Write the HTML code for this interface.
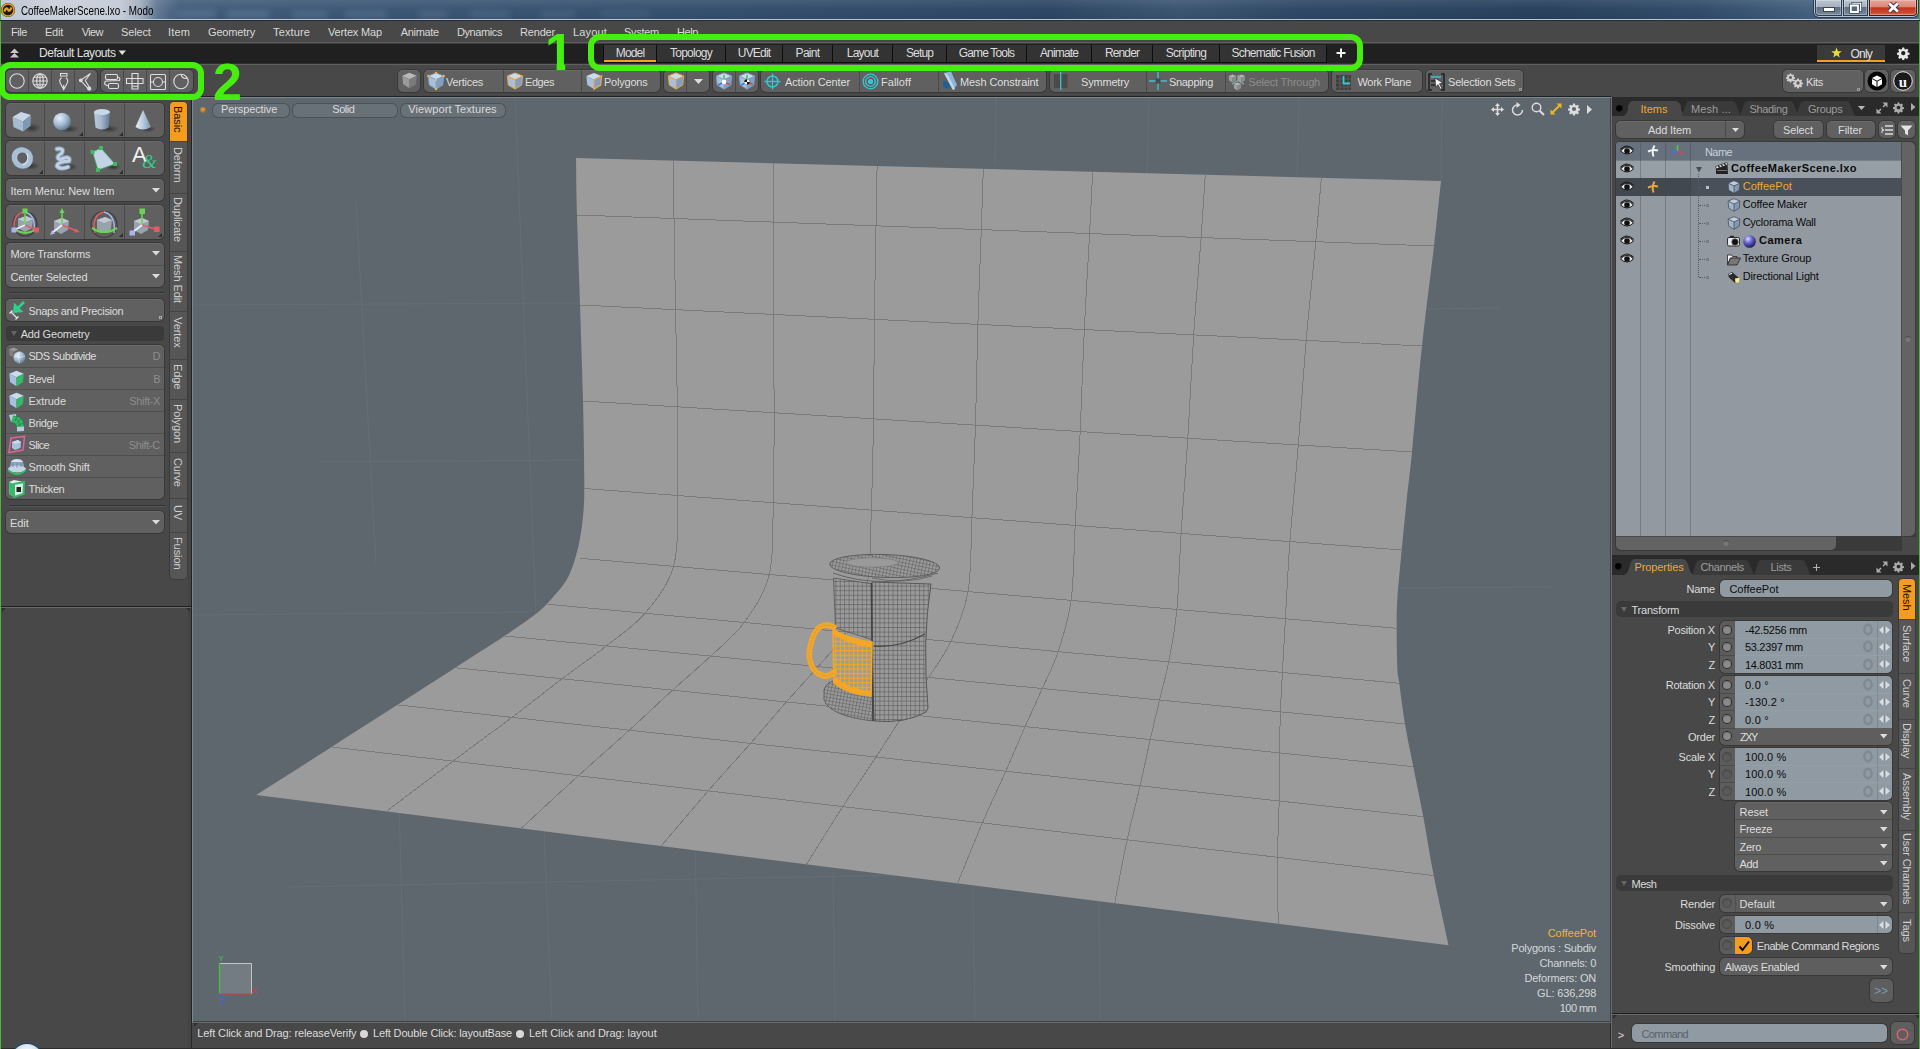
<!DOCTYPE html>
<html><head><meta charset="utf-8"><title>CoffeeMakerScene.lxo - Modo</title>
<style>
*{box-sizing:border-box;margin:0;padding:0}
html,body{width:1920px;height:1049px;overflow:hidden}
body{position:relative;background:#484848;font-family:"Liberation Sans",sans-serif;font-size:11px;color:#d4d4d4;line-height:1}
.a{position:absolute}
.t{position:absolute;white-space:nowrap;transform-origin:0 50%;letter-spacing:-0.15px}
.btn{position:absolute;background:#606060;border-radius:5px;box-shadow:0 0 0 1px #383838, inset 0 1px 0 #6a6a6a}
.dv{position:absolute;width:1px;background:#494949;top:0;bottom:0}
.grp{position:absolute;background:#606060;border-radius:5px;box-shadow:0 0 0 1px #383838, inset 0 1px 0 #6a6a6a}
svg{position:absolute;overflow:visible}
.vt{position:absolute;writing-mode:vertical-rl;white-space:nowrap;font-size:11px;color:#c8c8c8;letter-spacing:-0.1px}
</style></head>
<body>
<!-- title bar -->
<div class="a" style="left:0;top:0;width:1920px;height:20px;background:linear-gradient(180deg,rgba(255,255,255,0.10) 0,rgba(255,255,255,0.02) 45%,rgba(0,0,0,0.04) 100%),linear-gradient(90deg,#45607f 0px,#3c5776 300px,#35506f 600px,#2e4967 900px,#2b4563 1050px,#39536f 1180px,#2c4664 1300px,#263f5c 1550px,#2f4a68 1700px,#44617f 1820px,#52708f 1920px)"></div>
<div class="a" style="left:0;top:0;width:230px;height:19px;background:linear-gradient(90deg,rgba(198,205,216,0.95) 0,rgba(208,214,223,0.97) 60px,rgba(205,211,221,0.95) 120px,rgba(190,198,211,0.80) 140px,rgba(150,164,184,0.40) 157px,rgba(120,140,165,0) 180px)"></div>
<div class="a" style="left:176px;top:10px;width:40px;height:8px;border-radius:4px;background:rgba(140,165,195,0.28);filter:blur(3px)"></div>
<div class="a" style="left:226px;top:11px;width:44px;height:7px;border-radius:4px;background:rgba(140,165,195,0.30);filter:blur(3px)"></div>
<div class="a" style="left:292px;top:11px;width:36px;height:7px;border-radius:4px;background:rgba(140,165,195,0.25);filter:blur(3px)"></div>
<div class="a" style="left:345px;top:11px;width:42px;height:7px;border-radius:4px;background:rgba(140,165,195,0.25);filter:blur(3px)"></div>
<div class="a" style="left:418px;top:11px;width:30px;height:7px;border-radius:4px;background:rgba(140,165,195,0.22);filter:blur(3px)"></div>
<div class="a" style="left:470px;top:11px;width:40px;height:7px;border-radius:4px;background:rgba(140,165,195,0.20);filter:blur(3px)"></div>
<div class="a" style="left:540px;top:11px;width:36px;height:7px;border-radius:4px;background:rgba(140,165,195,0.18);filter:blur(3px)"></div>
<div class="a" style="left:600px;top:11px;width:50px;height:7px;border-radius:4px;background:rgba(140,165,195,0.15);filter:blur(3px)"></div>
<div class="a" style="left:0;top:19px;width:1920px;height:1px;background:#b9c7d6"></div>
<div class="a" style="left:0;top:20px;width:1920px;height:1px;background:#232c36;z-index:1"></div>
<div class="t" style="left:21px;top:4px;font-size:12px;color:#000;letter-spacing:0;height:14px;line-height:14px;transform:scaleX(0.818)">CoffeeMakerScene.lxo - Modo</div>
<!-- menu bar -->
<div class="a" style="left:0;top:21px;width:1920px;height:21px;background:#484848"></div>
<div class="a" style="left:0;top:42px;width:1920px;height:1px;background:#5f5f5f"></div>
<!-- layout bar -->
<div class="a" style="left:0;top:43px;width:1920px;height:21px;background:#202020"></div>
<div class="a" style="left:0;top:43px;width:1920px;height:1px;background:#3c3c3c"></div>
<div class="a" style="left:0;top:63px;width:1920px;height:1px;background:#303030"></div>
<div class="a" style="left:0;top:64px;width:1920px;height:1px;background:#5f5f5f"></div>
<!-- toolbar -->
<div class="a" style="left:0;top:65px;width:1920px;height:32px;background:#484848"></div>
<!-- left panel -->
<div class="a" style="left:0;top:97px;width:192px;height:952px;background:#484848"></div>
<div class="a" style="left:188px;top:97px;width:3px;height:952px;background:#444"></div>
<!-- viewport -->
<div class="a" style="left:191px;top:96px;width:1420px;height:926px;background:#202224"></div>
<div class="a" style="left:192px;top:97px;width:1419px;height:925px;background:#7d878f"></div>
<div class="a" style="left:193px;top:98px;width:1418px;height:924px;background:#3a454c"></div>
<div class="a" style="left:193px;top:98px;width:1417px;height:923px;background:#5f676e"></div>
<!-- status bar -->
<div class="a" style="left:191px;top:1022px;width:1421px;height:27px;background:#484848"></div>
<div class="a" style="left:192px;top:1022px;width:1420px;height:1px;background:#696969"></div>
<div class="a" style="left:191px;top:1022px;width:1px;height:27px;background:#2a2a2a"></div>
<div class="a" style="left:1610px;top:1023px;width:1px;height:26px;background:#2a2a2a"></div>
<!-- right panel -->
<div class="a" style="left:1611px;top:97px;width:309px;height:952px;background:#484848"></div>
<div class="a" style="left:1611px;top:97px;width:1px;height:952px;background:#696969"></div>
<!-- bottom edge -->
<div class="a" style="left:0;top:1048px;width:1920px;height:1px;background:#2c2c2c"></div>
<div class="a" style="left:11px;top:1044px;width:32px;height:32px;border-radius:50%;background:radial-gradient(circle at 50% 30%,#fff 0,#dfe8f0 30%,#a9bccb 60%);box-shadow:0 0 0 1px #0c4a84"></div>
<svg class="a" style="left:193px;top:98px;overflow:hidden" width="1417" height="923" viewBox="0 0 1417 923">
<path d="M322.0 -1.0L344.0 542.0M351.0 733.0L359.0 923.0M163.0 102.0L183.0 467.0M206.0 702.0L212.0 923.0M502.0 732.0L505.0 923.0M640.0 772.0L642.0 923.0M780.0 792.0L782.0 923.0M906.0 802.0L907.0 923.0M803.0 -1.0L802.0 67.0M956.0 -1.0L954.0 77.0M1106.0 -1.0L1104.0 82.0M1249.0 -1.0L1248.0 87.0M0.0 207.0L387.0 205.0M127.0 364.0L389.0 362.0M0.0 517.0L337.0 514.0M94.0 789.0L715.0 777.0M1227.0 211.0L1307.0 210.0M1207.0 490.0L1357.0 489.0" stroke="#69747b" stroke-width="0.8" fill="none" opacity="0.7"/>
<path d="M383.0 60.0C383.2 69.5 383.3 92.5 384.0 117.0C384.7 141.5 386.0 176.0 387.0 207.0C388.0 238.0 389.3 273.8 390.0 303.0C390.7 332.2 391.2 363.3 391.3 382.0C391.3 400.7 391.3 404.2 390.3 415.3C389.3 426.4 387.8 438.1 385.3 448.7C382.8 459.3 379.5 470.4 375.3 478.7C371.1 487.0 365.6 492.6 360.3 498.7C355.0 504.8 352.0 508.6 343.7 515.3C335.4 522.0 323.6 529.8 310.3 538.7C297.0 547.6 281.5 557.3 263.7 568.7C245.9 580.1 224.8 593.8 203.7 607.3C182.6 620.8 160.4 635.0 137.0 650.0C113.6 665.0 75.6 689.2 63.3 697.0L1255.6 847.3C1253.1 835.7 1244.9 798.9 1240.7 777.5C1236.5 756.1 1233.7 736.8 1230.3 718.7C1226.9 700.6 1223.3 684.2 1220.3 668.7C1217.2 653.2 1214.3 639.9 1212.0 626.0C1209.7 612.1 1207.6 594.8 1206.3 585.3C1205.0 575.8 1204.7 577.9 1204.3 568.7C1203.9 559.5 1203.7 541.4 1203.7 530.3C1203.7 519.2 1203.5 515.0 1204.3 502.0C1205.1 488.9 1207.1 468.7 1208.7 452.0C1210.3 435.3 1212.0 418.3 1213.7 402.0C1215.4 385.7 1216.5 379.7 1219.0 354.0C1221.5 328.3 1225.3 282.3 1229.0 248.0C1232.7 213.7 1237.8 175.5 1241.0 148.0C1244.2 120.5 1246.8 93.8 1248.0 83.0Z" fill="#9b9b9b"/>
<path d="M384.0 117.0 L1241.0 148.0M387.0 207.0 L1229.0 248.0M390.0 303.0 L1219.0 354.0M391.3 390.5 L1208.7 452.0M387.0 460.3 L1203.7 530.3M355.3 506.3 L1206.3 585.3M312.0 538.0 L1212.0 626.0M262.0 569.7 L1220.3 668.7M205.3 607.0 L1230.3 718.7M138.7 649.0 L1240.7 777.5M480.6 62.6C480.6 72.2 480.6 95.7 481.0 120.5C481.3 145.4 482.0 180.3 482.5 211.7C483.1 243.0 484.0 277.8 484.4 308.8C484.7 339.8 485.2 370.9 484.6 397.5C484.0 424.1 485.9 448.7 480.5 468.3C475.1 487.9 463.1 502.0 452.0 515.3C440.8 528.5 427.2 537.0 413.4 547.9C399.6 558.8 384.9 568.9 369.1 580.8C353.4 592.7 337.2 605.7 319.0 619.4C300.8 633.1 280.8 647.5 259.9 663.1C239.0 678.8 204.4 705.0 193.3 713.4M580.9 65.3C580.9 75.1 580.6 98.9 580.6 124.1C580.5 149.3 580.5 184.7 580.6 216.4C580.7 248.2 581.2 283.4 581.1 314.8C581.1 346.1 581.1 377.8 580.3 404.7C579.4 431.7 581.1 456.6 576.3 476.5C571.4 496.5 560.9 510.9 551.2 524.5C541.4 538.1 529.7 546.8 517.7 558.1C505.8 569.4 493.1 579.8 479.5 592.2C466.0 604.5 452.0 617.9 436.3 632.2C420.6 646.4 403.4 661.4 385.3 677.8C367.3 694.1 337.7 721.6 328.2 730.4M684.1 68.0C683.9 78.0 683.4 102.3 683.0 127.8C682.5 153.4 681.8 189.2 681.4 221.3C681.0 253.5 681.0 289.1 680.5 320.9C680.0 352.7 679.3 384.8 678.3 412.1C677.3 439.4 678.6 464.6 674.4 484.9C670.2 505.2 661.3 520.0 653.1 533.9C644.8 547.9 635.0 556.9 625.1 568.6C615.1 580.3 604.6 591.1 593.4 603.9C582.1 616.7 570.7 630.6 557.6 645.4C544.6 660.2 530.1 675.8 515.2 692.9C500.3 710.0 476.0 738.9 468.2 748.0M790.3 70.8C790.0 81.0 789.2 105.7 788.3 131.6C787.4 157.5 785.9 193.8 784.9 226.4C783.9 259.0 783.4 294.9 782.5 327.1C781.5 359.4 780.2 391.9 778.9 419.7C777.7 447.4 778.5 472.9 775.0 493.6C771.4 514.2 764.3 529.3 757.7 543.7C751.1 558.0 743.4 567.3 735.6 579.4C727.7 591.5 719.6 602.8 710.8 616.1C702.1 629.3 693.2 643.6 683.0 659.1C672.9 674.5 661.4 690.7 649.8 708.6C638.2 726.5 619.6 756.7 613.5 766.4M899.7 73.7C899.2 84.0 898.0 109.2 896.6 135.5C895.2 161.8 892.9 198.5 891.3 231.6C889.7 264.6 888.7 300.9 887.2 333.6C885.7 366.2 883.7 399.3 882.2 427.4C880.7 455.6 880.9 481.4 878.1 502.4C875.3 523.4 870.0 538.9 865.2 553.6C860.4 568.3 854.9 578.0 849.3 590.5C843.8 603.0 838.2 614.8 832.1 628.6C826.0 642.4 819.9 657.2 812.8 673.2C805.7 689.2 797.4 706.2 789.4 724.9C781.3 743.6 768.7 775.3 764.6 785.4M1012.3 76.7C1011.6 87.2 1010.0 112.9 1008.1 139.6C1006.1 166.3 1002.9 203.4 1000.7 236.9C998.5 270.3 996.9 307.1 994.8 340.2C992.7 373.3 990.0 406.9 988.1 435.4C986.3 463.9 985.9 490.0 983.9 511.5C981.8 532.9 978.6 548.8 975.7 563.9C972.9 579.0 969.6 589.1 966.6 602.0C963.5 614.9 960.5 627.2 957.2 641.5C954.0 655.8 950.9 671.1 947.1 687.8C943.2 704.5 938.4 722.2 934.2 741.8C929.9 761.3 923.8 794.6 921.7 805.2M1128.4 79.8C1127.4 90.5 1125.3 116.6 1122.8 143.7C1120.3 170.8 1116.1 208.5 1113.2 242.4C1110.3 276.2 1108.0 313.5 1105.3 347.0C1102.6 380.5 1099.1 414.6 1096.9 443.6C1094.8 472.5 1093.6 498.9 1092.4 520.8C1091.1 542.6 1090.2 558.9 1089.4 574.4C1088.6 590.0 1087.9 600.4 1087.4 613.8C1086.9 627.2 1086.8 640.0 1086.6 654.9C1086.4 669.7 1086.5 685.6 1086.2 703.0C1085.8 720.4 1084.7 738.8 1084.5 759.3C1084.3 779.8 1085.1 814.7 1085.2 825.8" fill="none" stroke="#7b7b7b" stroke-width="1" shape-rendering="crispEdges"/>
<!--VIEWEXTRA-->
<defs>
<pattern id="wf" width="4.4" height="4.6" patternUnits="userSpaceOnUse"><rect width="4.4" height="4.6" fill="#9a9a9a"/><path d="M0 0.5H4.4M0.5 0V4.6" stroke="#5c5c5c" stroke-width="0.6"/></pattern>
<pattern id="wf2" width="3.4" height="3.4" patternUnits="userSpaceOnUse" patternTransform="rotate(10)"><rect width="3.4" height="3.4" fill="#999"/><path d="M0 0.5H3.4M0.5 0V3.4" stroke="#606060" stroke-width="0.55"/></pattern>
<pattern id="wo" width="4.4" height="4.6" patternUnits="userSpaceOnUse"><rect width="4.4" height="4.6" fill="#a09c94"/><path d="M0 0.5H4.4M0.5 0V4.6" stroke="#f5a623" stroke-width="1.1"/></pattern>
</defs>
<path d="M631.0 592.0 Q633.0 583.0 647.0 581.0 L680.0 585.0 680.0 623.0 Q637.0 618.0 631.0 602.0 Z" fill="url(#wf2)" stroke="#555" stroke-width="0.8"/>
<path d="M640.5 480.0 L680.0 486.0 L680.0 542.0 L642.5 530.0 Z" fill="url(#wf)" stroke="#555" stroke-width="0.8"/>
<path d="M679.0 484.0 L738.0 486.0 Q729.0 542.0 735.0 610.0 L733.0 614.0 Q712.0 626.0 681.0 623.0 Q678.0 552.0 679.0 484.0 Z" fill="url(#wf)" stroke="#505050" stroke-width="0.9"/>
<path d="M681.0 548.0 Q707.0 550.0 732.0 536.0" stroke="#4a4a4a" stroke-width="1.3" fill="none"/>
<path d="M678.5 485.0 L680.0 623.0" stroke="#444" stroke-width="1.6" fill="none"/>
<ellipse cx="691.7" cy="468.0" rx="55" ry="11.5" fill="url(#wf2)" stroke="#5a5a5a" stroke-width="0.9" transform="rotate(2 691.7 468.0)"/>
<ellipse cx="679.0" cy="464.5" rx="26" ry="4.5" fill="#9a9a9a" stroke="#777" stroke-width="0.5"/>
<path d="M640.0 475.0 Q687.0 492.0 745.0 475.0" stroke="#5a5a5a" stroke-width="0.9" fill="none"/>
<path d="M679.0 480.0 Q712.0 487.0 739.0 478.0" stroke="#5a5a5a" stroke-width="0.7" fill="none"/>
<path d="M640.0 532.0 Q659.0 542.0 679.0 544.0 L678.0 598.0 Q655.0 596.0 641.0 585.0 Z" fill="url(#wo)" stroke="#f5a623" stroke-width="1.6"/>
<path d="M641.0 581.0 Q657.0 594.0 678.0 595.0" stroke="#f5a623" stroke-width="4.5" fill="none"/>
<path d="M640.0 534.0 Q659.0 545.0 679.0 547.0" stroke="#f5a623" stroke-width="4.5" fill="none"/>
<path d="M641.0 529.0 Q625.0 522.0 619.0 542.0 Q612.0 562.0 623.0 574.0 Q633.0 582.0 641.0 574.0 Q641.0 574.0 641.0 574.0" stroke="#f5a623" stroke-width="5.6" fill="none" stroke-linecap="round"/>
<path d="M641.0 529.0 Q625.0 522.0 619.0 542.0 Q612.0 562.0 623.0 574.0 Q633.0 582.0 641.0 574.0" stroke="#a49a8a" stroke-width="1" fill="none" stroke-dasharray="1.5 1.5"/>
<rect x="26.5" y="865.5" width="32" height="30.5" fill="#747c83"/>
<path d="M26.5 865.5 L58.5 865.5 L58.5 896.0" stroke="#c4c4c4" stroke-width="1" fill="none"/>
<path d="M26.5 865.0 L26.5 896.5" stroke="#3fc63f" stroke-width="1.2"/>
<path d="M26.0 896.0 L58.5 896.0" stroke="#e03636" stroke-width="1.2"/>
<path d="M26.5 896.0 L32.0 900.5" stroke="#3a66e8" stroke-width="1.2"/>
<text x="25.5" y="862.5" font-size="8" fill="#3fc63f" font-family="Liberation Sans,sans-serif">Y</text>
<text x="58.5" y="895.0" font-size="8" fill="#e03636" font-family="Liberation Sans,sans-serif">X</text>
<text x="27.0" y="905.5" font-size="8" fill="#3a66e8" font-family="Liberation Sans,sans-serif">Z</text>
</svg>
<div class="a" style="left:199.5px;top:106.5px;width:6px;height:6px;border-radius:50%;background:radial-gradient(circle at 45% 40%,#e8a040,#7a5a30)"></div>
<div class="a" style="left:212.5px;top:103.5px;width:76px;height:13px;background:#687178;border-radius:5px;box-shadow:0 0 0 1px #4b5359"></div>
<div class="a" style="left:292.5px;top:103.5px;width:104px;height:13px;background:#687178;border-radius:5px;box-shadow:0 0 0 1px #4b5359"></div>
<div class="a" style="left:400.5px;top:103.5px;width:104px;height:13px;background:#687178;border-radius:5px;box-shadow:0 0 0 1px #4b5359"></div>
<div class="t" style="left:221.0px;top:102.3px;font-size:11px;line-height:15px;letter-spacing:-0.11px;color:#dadada;">Perspective</div>
<div class="t" style="left:332.3px;top:102.3px;font-size:11px;line-height:15px;letter-spacing:-0.49px;color:#dadada;">Solid</div>
<div class="t" style="left:408.3px;top:102.3px;font-size:11px;line-height:15px;letter-spacing:0.08px;color:#dadada;">Viewport Textures</div>
<svg class="a" style="left:1491px;top:102.5px" width="13" height="13" viewBox="0 0 13 13"><path d="M6.500 0 L9 3 H7.300 V5.700 H10 V4 L13 6.500 L10 9 V7.300 H7.300 V10 H9 L6.500 13 L4 10 H5.700 V7.300 H3 V9 L0 6.500 L3 4 V5.700 H5.700 V3 H4Z" fill="#dcdcdc"/></svg>
<svg class="a" style="left:1511px;top:102px" width="13" height="14" viewBox="0 0 13 14"><path d="M6.500 3 A5 5 0 1 0 11.500 8" fill="none" stroke="#dcdcdc" stroke-width="1.500"/><path d="M5.500 0 L9.500 3 L5.500 6Z" fill="#dcdcdc"/></svg>
<svg class="a" style="left:1531px;top:102px" width="14" height="14" viewBox="0 0 14 14"><circle cx="5.500" cy="5.500" r="4.300" fill="none" stroke="#dcdcdc" stroke-width="1.400"/><path d="M8.700 8.700 L13 13" stroke="#dcdcdc" stroke-width="2"/></svg>
<svg class="a" style="left:1550px;top:103px" width="12" height="12" viewBox="0 0 12 12"><path d="M6.500 0.500H11.500V5.500Z M0.500 6.500V11.500H5.500Z" fill="#e8b820"/><path d="M10 2 L2 10" stroke="#e8b820" stroke-width="2"/></svg>
<svg class="a" style="left:1567.5px;top:103px" width="12" height="12" viewBox="0 0 20 20"><g fill="#dcdcdc"><path d="M10 0.8l1.6 0.2 0.5 2.6 1.6 0.7 2.2-1.5 2.3 2.3-1.5 2.2 0.7 1.6 2.6 0.5v3.2l-2.6 0.5-0.7 1.6 1.5 2.2-2.3 2.3-2.2-1.5-1.6 0.7-0.5 2.6h-3.2l-0.5-2.6-1.6-0.7-2.2 1.5-2.3-2.3 1.5-2.2-0.7-1.6-2.6-0.5v-3.2l2.6-0.5 0.7-1.6-1.5-2.2 2.3-2.3 2.2 1.5 1.6-0.7 0.5-2.6z M10 6.6a3.4 3.4 0 1 0 0.01 0z" fill-rule="evenodd"/></g></svg>
<svg class="a" style="left:1587px;top:104.5px" width="5" height="9" viewBox="0 0 5 9"><path d="M0 0V9L5 4.500Z" fill="#dcdcdc"/></svg>
<div class="t" style="left:1547.7px;top:926.0px;font-size:11px;line-height:15px;letter-spacing:-0.03px;color:#f5b030;">CoffeePot</div>
<div class="t" style="left:1511.3px;top:941.0px;font-size:11px;line-height:15px;letter-spacing:-0.19px;color:#d3d7da;">Polygons : Subdiv</div>
<div class="t" style="left:1539.5px;top:956.0px;font-size:11px;line-height:15px;letter-spacing:-0.19px;color:#d3d7da;">Channels: 0</div>
<div class="t" style="left:1524.4px;top:971.0px;font-size:11px;line-height:15px;letter-spacing:-0.17px;color:#d3d7da;">Deformers: ON</div>
<div class="t" style="left:1537.0px;top:986.0px;font-size:11px;line-height:15px;letter-spacing:-0.13px;color:#d3d7da;">GL: 636,298</div>
<div class="t" style="left:1559.8px;top:1001.0px;font-size:11px;line-height:15px;letter-spacing:-0.56px;color:#d3d7da;">100 mm</div>
<div class="t" style="left:197.3px;top:1026.0px;font-size:11px;line-height:15px;letter-spacing:-0.12px;color:#dcdcdc;">Left Click and Drag: releaseVerify</div>
<div class="a" style="left:360px;top:1029.5px;width:8px;height:8px;border-radius:50%;background:#d8d8d8"></div>
<div class="t" style="left:373.0px;top:1026.0px;font-size:11px;line-height:15px;letter-spacing:-0.16px;color:#dcdcdc;">Left Double Click: layoutBase</div>
<div class="a" style="left:516px;top:1029.5px;width:8px;height:8px;border-radius:50%;background:#d8d8d8"></div>
<div class="t" style="left:529.0px;top:1026.0px;font-size:11px;line-height:15px;letter-spacing:-0.05px;color:#dcdcdc;">Left Click and Drag: layout</div>
<svg class="a" style="left:194px;top:1023px" width="4" height="4" viewBox="0 0 4 4"><path d="M0 0H4L0 4Z" fill="#2e2e2e"/></svg>
<div class="t" style="left:11.0px;top:25.0px;font-size:11px;line-height:15px;letter-spacing:-0.43px;color:#d8d8d8;">File</div>
<div class="t" style="left:45.0px;top:25.0px;font-size:11px;line-height:15px;letter-spacing:-0.24px;color:#d8d8d8;">Edit</div>
<div class="t" style="left:81.7px;top:25.0px;font-size:11px;line-height:15px;letter-spacing:-0.59px;color:#d8d8d8;">View</div>
<div class="t" style="left:121.0px;top:25.0px;font-size:11px;line-height:15px;letter-spacing:-0.15px;color:#d8d8d8;">Select</div>
<div class="t" style="left:168.0px;top:25.0px;font-size:11px;line-height:15px;letter-spacing:0.15px;color:#d8d8d8;">Item</div>
<div class="t" style="left:208.0px;top:25.0px;font-size:11px;line-height:15px;letter-spacing:-0.16px;color:#d8d8d8;">Geometry</div>
<div class="t" style="left:273.0px;top:25.0px;font-size:11px;line-height:15px;letter-spacing:0.13px;color:#d8d8d8;">Texture</div>
<div class="t" style="left:328.0px;top:25.0px;font-size:11px;line-height:15px;letter-spacing:-0.17px;color:#d8d8d8;">Vertex Map</div>
<div class="t" style="left:400.7px;top:25.0px;font-size:11px;line-height:15px;letter-spacing:-0.30px;color:#d8d8d8;">Animate</div>
<div class="t" style="left:457.0px;top:25.0px;font-size:11px;line-height:15px;letter-spacing:-0.41px;color:#d8d8d8;">Dynamics</div>
<div class="t" style="left:520.0px;top:25.0px;font-size:11px;line-height:15px;letter-spacing:-0.18px;color:#d8d8d8;">Render</div>
<div class="t" style="left:573.0px;top:25.0px;font-size:11px;line-height:15px;letter-spacing:0.16px;color:#d8d8d8;">Layout</div>
<div class="t" style="left:624.0px;top:25.0px;font-size:11px;line-height:15px;letter-spacing:-0.28px;color:#d8d8d8;">System</div>
<div class="t" style="left:677.0px;top:25.0px;font-size:11px;line-height:15px;letter-spacing:-0.41px;color:#d8d8d8;">Help</div>
<svg class="a" style="left:9px;top:47px" width="12" height="12" viewBox="0 0 12 12"><path d="M1 6 L5.5 1.5 L10 6Z M1 10.5 L5.5 6 L10 10.5Z" fill="#c8c8c8"/></svg>
<div class="t" style="left:39.0px;top:45.0px;font-size:12px;line-height:16px;letter-spacing:-0.46px;color:#e0e0e0;">Default Layouts</div>
<svg class="a" style="left:118px;top:50px" width="9" height="6" viewBox="0 0 9 6"><path d="M0.5 0.5 L8 0.5 L4.2 5Z" fill="#e0e0e0"/></svg>
<div class="a" style="left:603px;top:45px;width:724px;height:18px;background:#0e0e0e;"></div>
<div class="a" style="left:604px;top:45px;width:52px;height:17px;background:#3a3a3a;"></div>
<div class="t" style="left:615.8px;top:45.0px;font-size:12px;line-height:16px;letter-spacing:-0.85px;color:#dcdcdc;">Model</div>
<div class="a" style="left:657px;top:45px;width:68px;height:17px;background:#333;"></div>
<div class="t" style="left:670.1px;top:45.0px;font-size:12px;line-height:16px;letter-spacing:-0.78px;color:#dcdcdc;">Topology</div>
<div class="a" style="left:726px;top:45px;width:56px;height:17px;background:#333;"></div>
<div class="t" style="left:737.8px;top:45.0px;font-size:12px;line-height:16px;letter-spacing:-0.81px;color:#dcdcdc;">UVEdit</div>
<div class="a" style="left:783px;top:45px;width:49px;height:17px;background:#333;"></div>
<div class="t" style="left:795.6px;top:45.0px;font-size:12px;line-height:16px;letter-spacing:-0.71px;color:#dcdcdc;">Paint</div>
<div class="a" style="left:833px;top:45px;width:59px;height:17px;background:#333;"></div>
<div class="t" style="left:846.8px;top:45.0px;font-size:12px;line-height:16px;letter-spacing:-0.78px;color:#dcdcdc;">Layout</div>
<div class="a" style="left:893px;top:45px;width:53px;height:17px;background:#333;"></div>
<div class="t" style="left:905.9px;top:45.0px;font-size:12px;line-height:16px;letter-spacing:-0.81px;color:#dcdcdc;">Setup</div>
<div class="a" style="left:947px;top:45px;width:79px;height:17px;background:#333;"></div>
<div class="t" style="left:958.7px;top:45.0px;font-size:12px;line-height:16px;letter-spacing:-0.83px;color:#dcdcdc;">Game Tools</div>
<div class="a" style="left:1027px;top:45px;width:64px;height:17px;background:#333;"></div>
<div class="t" style="left:1039.9px;top:45.0px;font-size:12px;line-height:16px;letter-spacing:-0.82px;color:#dcdcdc;">Animate</div>
<div class="a" style="left:1092px;top:45px;width:60px;height:17px;background:#333;"></div>
<div class="t" style="left:1104.9px;top:45.0px;font-size:12px;line-height:16px;letter-spacing:-0.85px;color:#dcdcdc;">Render</div>
<div class="a" style="left:1153px;top:45px;width:66px;height:17px;background:#333;"></div>
<div class="t" style="left:1165.7px;top:45.0px;font-size:12px;line-height:16px;letter-spacing:-0.67px;color:#dcdcdc;">Scripting</div>
<div class="a" style="left:1220px;top:45px;width:106px;height:17px;background:#333;"></div>
<div class="t" style="left:1231.5px;top:45.0px;font-size:12px;line-height:16px;letter-spacing:-0.77px;color:#dcdcdc;">Schematic Fusion</div>
<div class="a" style="left:604px;top:60px;width:52px;height:2px;background:#f59e1f;"></div>
<svg class="a" style="left:1336px;top:48px" width="10" height="10" viewBox="0 0 10 10"><path d="M5 0.5V9.5M0.5 5H9.5" stroke="#f2f2f2" stroke-width="2" fill="none"/></svg>
<div class="a" style="left:1817px;top:45px;width:68px;height:17px;background:#3a3a3a;"></div>
<div class="a" style="left:1817px;top:60px;width:68px;height:2px;background:#f59e1f;"></div>
<svg class="a" style="left:1831px;top:47px" width="11" height="11" viewBox="0 0 24 24"><path d="M12 1 L15 9 L23.5 9.3 L16.8 14.5 L19 22.8 L12 18 L5 22.8 L7.2 14.5 L0.5 9.3 L9 9Z" fill="#e6de3c"/></svg>
<div class="t" style="left:1850.5px;top:45.5px;font-size:12px;line-height:16px;letter-spacing:-0.79px;color:#e0e0e0;">Only</div>
<svg class="a" style="left:1897px;top:47px" width="12.5" height="12.5" viewBox="0 0 20 20"><g fill="#e8e8e8" transform="translate(0,-0.2)"><path d="M10 0.8l1.6 0.2 0.5 2.6 1.6 0.7 2.2-1.5 2.3 2.3-1.5 2.2 0.7 1.6 2.6 0.5v3.2l-2.6 0.5-0.7 1.6 1.5 2.2-2.3 2.3-2.2-1.5-1.6 0.7-0.5 2.6h-3.2l-0.5-2.6-1.6-0.7-2.2 1.5-2.3-2.3 1.5-2.2-0.7-1.6-2.6-0.5v-3.2l2.6-0.5 0.7-1.6-1.5-2.2 2.3-2.3 2.2 1.5 1.6-0.7 0.5-2.6z M10 6.6a3.4 3.4 0 1 0 0.01 0z" fill-rule="evenodd"/></g></svg>
<div class="grp" style="left:5.5px;top:69.5px;width:91.5px;height:22.5px"><div class="dv" style="left:22.5px"></div><div class="dv" style="left:45.5px"></div><div class="dv" style="left:68.5px"></div></div>
<div class="grp" style="left:100.5px;top:69.5px;width:92px;height:22.5px"><div class="dv" style="left:22.5px"></div><div class="dv" style="left:45.5px"></div><div class="dv" style="left:68.5px"></div></div>
<svg class="a" style="left:0;top:0" width="200" height="100" viewBox="0 0 200 100"><g fill="none" stroke="#dedede" stroke-width="1.1"><circle cx="17" cy="81" r="7.2"/><circle cx="40" cy="81" r="7.2"/><ellipse cx="40" cy="81" rx="3.3" ry="7.2"/><path d="M32.8 81H47.2M40 73.8V88.2M34 77.3H46M34 84.7H46"/><path d="M60.5 73.5h6.500v2.500h-6.500z M61.500 77.500 Q58.500 80.500 60.500 83.500 L63.700 89.500 L67 83.500 Q69 80.500 66 77.500 M63.700 89.500 V85"/><path d="M90.500 73.500 L80.500 80.300 L88.500 88.800 M90.500 73.500 L85.300 80.500 L89.500 87.500"/><circle cx="80.800" cy="80.300" r="1.300" fill="#dedede"/><circle cx="89.200" cy="88.600" r="1.600" fill="#dedede"/><rect x="105.5" y="74.5" width="12" height="5" rx="1.5"/><rect x="108.5" y="83.5" width="10" height="5" rx="1.5"/><path d="M117.5 77 Q120.5 77.5 119.5 80.5 L106 81 Q104 82 105 84.5 L108.5 86"/><path d="M132 73.5h6v5h5v5h-5v5.5h-6v-5.5h-5.5v-5h5.5z M132 78.5h6M132 83.5h6M132 78.5v5M138 78.5v5M132 86.3h6"/><rect x="150.5" y="74.5" width="15" height="15" rx="1"/><circle cx="158" cy="82" r="4.5"/><path d="M150.5 82h3M162.5 82h3"/><circle cx="181" cy="81.5" r="7.2"/><path d="M181 74.3 Q182 79 187.5 78.3"/></g></svg>
<div class="grp" style="left:397.5px;top:69.5px;width:22.5px;height:22.5px"></div>
<svg class="a" style="left:400.5px;top:72px" width="17" height="17" viewBox="0 0 20 20"><path d="M10 1 L18.5 4.5 L10 8.5 L1.5 4.5Z" fill="#b9b9b9"/><path d="M1.5 4.5 L10 8.5 L10 19 L2.5 14.5Z" fill="#9a9a9a"/><path d="M18.5 4.5 L10 8.5 L10 19 L17.5 14.5Z" fill="#7c7c7c"/></svg>
<div class="grp" style="left:424px;top:69.5px;width:236px;height:22.5px"><div class="dv" style="left:78.5px"></div><div class="dv" style="left:157px"></div></div>
<svg class="a" style="left:426.5px;top:71.5px" width="18" height="18" viewBox="0 0 20 20"><path d="M10 1 L18.5 4.5 L10 8.5 L1.5 4.5Z" fill="#c9dcf0"/><path d="M1.5 4.5 L10 8.5 L10 19 L2.5 14.5Z" fill="#a6c0dd"/><path d="M18.5 4.5 L10 8.5 L10 19 L17.5 14.5Z" fill="#829fc2"/><path d="M10 1 L18.5 4.5 L17.5 14.5 L10 19 L2.5 14.5 L1.5 4.5Z M1.5 4.5 L10 8.5 L18.5 4.5 M10 8.5V19" fill="none" stroke="#7fa3c8" stroke-width="1"/><g fill="#f2b24a"><circle cx="10" cy="1.2" r="1.4"/><circle cx="18.5" cy="4.5" r="1.4"/><circle cx="1.5" cy="4.5" r="1.4"/><circle cx="10" cy="19" r="1.4"/><circle cx="10" cy="8.5" r="1.4"/></g></svg>
<div class="t" style="left:446.0px;top:74.5px;font-size:11px;line-height:15px;letter-spacing:-0.27px;color:#dedede;">Vertices</div>
<svg class="a" style="left:505.5px;top:71.5px" width="18" height="18" viewBox="0 0 20 20"><path d="M10 1 L18.5 4.5 L10 8.5 L1.5 4.5Z" fill="#c9dcf0"/><path d="M1.5 4.5 L10 8.5 L10 19 L2.5 14.5Z" fill="#a6c0dd"/><path d="M18.5 4.5 L10 8.5 L10 19 L17.5 14.5Z" fill="#829fc2"/><path d="M10 1 L18.5 4.5 L17.5 14.5 L10 19 L2.5 14.5 L1.5 4.5Z M1.5 4.5 L10 8.5 L18.5 4.5 M10 8.5V19" fill="none" stroke="#f0a640" stroke-width="1"/></svg>
<div class="t" style="left:525.0px;top:74.5px;font-size:11px;line-height:15px;letter-spacing:-0.44px;color:#dedede;">Edges</div>
<svg class="a" style="left:584.5px;top:71.5px" width="18" height="18" viewBox="0 0 20 20"><path d="M10 1 L18.5 4.5 L10 8.5 L1.5 4.5Z" fill="#c9dcf0"/><path d="M1.5 4.5 L10 8.5 L10 19 L2.5 14.5Z" fill="#a6c0dd"/><path d="M18.5 4.5 L10 8.5 L10 19 L17.5 14.5Z" fill="#829fc2"/><path d="M18.5 4.5 L10 8.5 L10 19 L17.5 14.5Z" fill="none" stroke="#f0a640" stroke-width="1.3"/></svg>
<div class="t" style="left:604.0px;top:74.5px;font-size:11px;line-height:15px;letter-spacing:-0.22px;color:#dedede;">Polygons</div>
<div class="grp" style="left:664px;top:69.5px;width:45px;height:22.5px"><div class="dv" style="left:22px"></div></div>
<svg class="a" style="left:666.5px;top:71.5px" width="18" height="18" viewBox="0 0 20 20"><path d="M10 1 L18.5 4.5 L10 8.5 L1.5 4.5Z" fill="#c9dcf0"/><path d="M1.5 4.5 L10 8.5 L10 19 L2.5 14.5Z" fill="#a6c0dd"/><path d="M18.5 4.5 L10 8.5 L10 19 L17.5 14.5Z" fill="#829fc2"/><path d="M10 1 L18.5 4.5 L17.5 14.5 L10 19 L2.5 14.5 L1.5 4.5Z M1.5 4.5 L10 8.5 L18.5 4.5 M10 8.5V19" fill="none" stroke="#f0a640" stroke-width="1"/></svg>
<svg class="a" style="left:693.5px;top:79px" width="9" height="5" viewBox="0 0 9 5"><path d="M0 0H9 L4.5 5Z" fill="#dcdcdc"/></svg>
<div class="grp" style="left:712.5px;top:69.5px;width:45px;height:22.5px"><div class="dv" style="left:22.5px"></div></div>
<svg class="a" style="left:714.5px;top:71.5px" width="18" height="18" viewBox="0 0 20 20"><path d="M10 1 L18.5 4.5 L10 8.5 L1.5 4.5Z" fill="#c9dcf0"/><path d="M1.5 4.5 L10 8.5 L10 19 L2.5 14.5Z" fill="#a6c0dd"/><path d="M18.5 4.5 L10 8.5 L10 19 L17.5 14.5Z" fill="#829fc2"/><path d="M10 1 L18.5 4.5 L17.5 14.5 L10 19 L2.5 14.5 L1.5 4.5Z M1.5 4.5 L10 8.5 L18.5 4.5 M10 8.5V19" fill="none" stroke="#7fa3c8" stroke-width="1"/><path d="M10 11 L10 3" stroke="#3fbf4f" stroke-width="1.6"/><path d="M10 11 L16.5 14" stroke="#e03c3c" stroke-width="1.6"/><path d="M10 11 L3.5 14.5" stroke="#3c66e0" stroke-width="1.6"/><circle cx="10" cy="11" r="2.6" fill="#fff"/></svg>
<svg class="a" style="left:737.5px;top:71.5px" width="18" height="18" viewBox="0 0 20 20"><path d="M10 1 L18.5 4.5 L10 8.5 L1.5 4.5Z" fill="#c9dcf0"/><path d="M1.5 4.5 L10 8.5 L10 19 L2.5 14.5Z" fill="#a6c0dd"/><path d="M18.5 4.5 L10 8.5 L10 19 L17.5 14.5Z" fill="#829fc2"/><path d="M10 1 L18.5 4.5 L17.5 14.5 L10 19 L2.5 14.5 L1.5 4.5Z M1.5 4.5 L10 8.5 L18.5 4.5 M10 8.5V19" fill="none" stroke="#7fa3c8" stroke-width="1"/><path d="M10 11 L10 3" stroke="#3fbf4f" stroke-width="1.6"/><path d="M10 11 L16.5 14" stroke="#e03c3c" stroke-width="1.6"/><path d="M10 11 L3.5 14.5" stroke="#3c66e0" stroke-width="1.6"/><circle cx="10" cy="11" r="3" fill="#111"/><path d="M10 11 L10 8 A3 3 0 0 1 13 11Z M10 11 L10 14 A3 3 0 0 1 7 11Z" fill="#fff"/></svg>
<div class="grp" style="left:761px;top:69.5px;width:285px;height:22.5px"><div class="dv" style="left:97.5px"></div><div class="dv" style="left:176.5px"></div></div>
<svg class="a" style="left:764px;top:72.5px" width="17" height="17" viewBox="0 0 17 17"><circle cx="8.5" cy="8.5" r="5.5" fill="none" stroke="#35c6d6" stroke-width="1.5"/><path d="M8.5 0.5V16.5M0.5 8.5H16.5" stroke="#35c6d6" stroke-width="1.3"/></svg>
<div class="t" style="left:785.0px;top:74.5px;font-size:11px;line-height:15px;letter-spacing:-0.13px;color:#dedede;">Action Center</div>
<svg class="a" style="left:862px;top:72.5px" width="17" height="17" viewBox="0 0 17 17"><circle cx="8.5" cy="8.5" r="7.3" fill="none" stroke="#35c6d6" stroke-width="1.3"/><circle cx="8.5" cy="8.5" r="4.8" fill="none" stroke="#35c6d6" stroke-width="1.3"/><circle cx="8.5" cy="8.5" r="2.6" fill="#35c6d6"/></svg>
<div class="t" style="left:881.0px;top:74.5px;font-size:11px;line-height:15px;letter-spacing:0.03px;color:#dedede;">Falloff</div>
<svg class="a" style="left:941px;top:71px" width="18" height="20" viewBox="0 0 18 20"><path d="M3 2 L10 0.5 L16 14 L12 19 Z" fill="#8fb4da"/><path d="M3 2 L7 4 L14 18 L12 19Z" fill="#c3d8ee"/><path d="M2 10 Q8 9 9 17 Q4 19 2 15Z" fill="#1d5f96"/></svg>
<div class="t" style="left:960.0px;top:74.5px;font-size:11px;line-height:15px;letter-spacing:-0.11px;color:#dedede;">Mesh Constraint</div>
<div class="grp" style="left:1049.5px;top:69.5px;width:278.5px;height:22.5px"><div class="dv" style="left:96.5px"></div><div class="dv" style="left:175.5px"></div></div>
<svg class="a" style="left:1052px;top:72px" width="20" height="18" viewBox="0 0 20 18"><rect x="2" y="2" width="13.5" height="14" fill="#4a4a4a"/><path d="M8.700 0V18" stroke="#35c6d6" stroke-width="1.3"/></svg>
<div class="t" style="left:1081.0px;top:74.5px;font-size:11px;line-height:15px;letter-spacing:-0.19px;color:#dedede;">Symmetry</div>
<svg class="a" style="left:1149px;top:72px" width="18" height="18" viewBox="0 0 18 18"><path d="M9 0V18M0 9H18" stroke="#35c6d6" stroke-width="1.3"/><rect x="6.5" y="6.5" width="5" height="5" fill="#4a4a4a"/></svg>
<div class="t" style="left:1169.0px;top:74.5px;font-size:11px;line-height:15px;letter-spacing:-0.32px;color:#dedede;">Snapping</div>
<svg class="a" style="left:1229px;top:74px" width="18" height="16" viewBox="0 0 18 16"><path d="M9 6.500 V1 M9 6.500 L3 10 M9 6.500 L15 10" stroke="#7faeb0" stroke-width="1.200" fill="none"/></svg><svg class="a" style="left:1228px;top:73.5px" width="9" height="9" viewBox="0 0 20 20"><path d="M10 1 L18.5 4.5 L10 8.5 L1.5 4.5Z" fill="#b4b4b4"/><path d="M1.5 4.5 L10 8.5 L10 19 L2.5 14.5Z" fill="#a0a0a0"/><path d="M18.5 4.5 L10 8.5 L10 19 L17.5 14.5Z" fill="#8c8c8c"/></svg><svg class="a" style="left:1237px;top:73.5px" width="9" height="9" viewBox="0 0 20 20"><path d="M10 1 L18.5 4.5 L10 8.5 L1.5 4.5Z" fill="#b4b4b4"/><path d="M1.5 4.5 L10 8.5 L10 19 L2.5 14.5Z" fill="#a0a0a0"/><path d="M18.5 4.5 L10 8.5 L10 19 L17.5 14.5Z" fill="#8c8c8c"/></svg><svg class="a" style="left:1232.5px;top:81.5px" width="9" height="9" viewBox="0 0 20 20"><path d="M10 1 L18.5 4.5 L10 8.5 L1.5 4.5Z" fill="#b4b4b4"/><path d="M1.5 4.5 L10 8.5 L10 19 L2.5 14.5Z" fill="#a0a0a0"/><path d="M18.5 4.5 L10 8.5 L10 19 L17.5 14.5Z" fill="#8c8c8c"/></svg>
<div class="t" style="left:1248.5px;top:74.5px;font-size:11px;line-height:15px;letter-spacing:-0.21px;color:#8c8c8c;">Select Through</div>
<div class="grp" style="left:1332px;top:69.5px;width:90px;height:22.5px"></div>
<svg class="a" style="left:1336px;top:74.5px" width="16" height="16" viewBox="0 0 16 16"><rect x="0" y="0" width="15" height="15" fill="#3e3e3e"/><path d="M0 4H15M0 8H15M0 12H15M4 0V15M8 0V15M12 0V15" stroke="#5a5a5a" stroke-width="1"/><path d="M7.5 1V8.5H14" stroke="#35c6d6" stroke-width="1.8" fill="none"/></svg>
<div class="t" style="left:1357.5px;top:74.5px;font-size:11px;line-height:15px;letter-spacing:-0.32px;color:#dedede;">Work Plane</div>
<div class="grp" style="left:1426px;top:69.5px;width:97px;height:22.5px"></div>
<svg class="a" style="left:1428px;top:73px" width="18" height="18" viewBox="0 0 18 18"><path d="M4 1H1V17H4M13 1H16V17H13" stroke="#222" stroke-width="1.6" fill="none"/><path d="M3 4H13" stroke="#35c6d6" stroke-width="1.5"/><path d="M3 8H8M3 12H7" stroke="#222" stroke-width="1.3"/><path d="M7 5 L15 10 L11.5 10.8 L14 15.5 L12.3 16.3 L10 11.7 L7.5 14Z" fill="#f4f4f4" stroke="#222" stroke-width="0.7"/></svg>
<div class="t" style="left:1448.0px;top:74.5px;font-size:11px;line-height:15px;letter-spacing:-0.21px;color:#dedede;">Selection Sets</div>
<div class="a" style="left:1519px;top:88px;width:3px;height:3px;background:none;border:1px solid #999"></div>
<div class="grp" style="left:1783px;top:69.5px;width:79.5px;height:22.5px"></div>
<svg class="a" style="left:1786px;top:72.5px" width="9" height="9" viewBox="0 0 20 20"><g fill="#d0d0d0"><path d="M10 0.8l1.6 0.2 0.5 2.6 1.6 0.7 2.2-1.5 2.3 2.3-1.5 2.2 0.7 1.6 2.6 0.5v3.2l-2.6 0.5-0.7 1.6 1.5 2.2-2.3 2.3-2.2-1.5-1.6 0.7-0.5 2.6h-3.2l-0.5-2.6-1.6-0.7-2.2 1.5-2.3-2.3 1.5-2.2-0.7-1.6-2.6-0.5v-3.2l2.6-0.5 0.7-1.6-1.5-2.2 2.3-2.3 2.2 1.5 1.6-0.7 0.5-2.6z M10 6.6a3.4 3.4 0 1 0 0.01 0z" fill-rule="evenodd"/></g></svg><svg class="a" style="left:1793px;top:78px" width="10" height="10" viewBox="0 0 20 20"><g fill="#d0d0d0"><path d="M10 0.8l1.6 0.2 0.5 2.6 1.6 0.7 2.2-1.5 2.3 2.3-1.5 2.2 0.7 1.6 2.6 0.5v3.2l-2.6 0.5-0.7 1.6 1.5 2.2-2.3 2.3-2.2-1.5-1.6 0.7-0.5 2.6h-3.2l-0.5-2.6-1.6-0.7-2.2 1.5-2.3-2.3 1.5-2.2-0.7-1.6-2.6-0.5v-3.2l2.6-0.5 0.7-1.6-1.5-2.2 2.3-2.3 2.2 1.5 1.6-0.7 0.5-2.6z M10 6.6a3.4 3.4 0 1 0 0.01 0z" fill-rule="evenodd"/></g></svg>
<div class="t" style="left:1806.0px;top:74.5px;font-size:11px;line-height:15px;letter-spacing:-0.34px;color:#dedede;">Kits</div>
<div class="a" style="left:1857px;top:88px;width:3px;height:3px;background:none;border:1px solid #999"></div>
<div class="grp" style="left:1865px;top:69.5px;width:23px;height:22.5px"></div>
<svg class="a" style="left:1866.5px;top:71px" width="20" height="20" viewBox="0 0 20 20"><circle cx="10" cy="10" r="9.5" fill="#050505"/><path d="M10 4.5 L15 7 L10 9.7 L5 7Z" fill="#fff"/><path d="M5 8 L9.5 10.5 V16 L5 13.3Z" fill="#fff"/><path d="M15 8 L10.5 10.5 V16 L15 13.3Z" fill="#fff"/></svg>
<div class="grp" style="left:1891px;top:69.5px;width:23.5px;height:22.5px"></div>
<svg class="a" style="left:1893px;top:71px" width="20" height="20" viewBox="0 0 20 20"><circle cx="10" cy="10" r="9.3" fill="#1a1a1a" stroke="#e8e8e8" stroke-width="1"/><text x="10" y="15.5" font-family="Liberation Serif,serif" font-weight="bold" font-size="15" text-anchor="middle" fill="#f4f4f4">u</text></svg>
<svg class="a" width="0" height="0" style="left:0;top:0"><defs>
<radialGradient id="gs" cx="35%" cy="30%" r="75%"><stop offset="0" stop-color="#e4eef8"/><stop offset="0.5" stop-color="#a9bfd6"/><stop offset="1" stop-color="#5d7690"/></radialGradient>
<linearGradient id="gc" x1="0" x2="1"><stop offset="0" stop-color="#b9cbde"/><stop offset="0.45" stop-color="#a3b8cf"/><stop offset="1" stop-color="#61798f"/></linearGradient>
<linearGradient id="gk" x1="0" x2="1"><stop offset="0" stop-color="#e6eef7"/><stop offset="0.5" stop-color="#b7c9dc"/><stop offset="1" stop-color="#7d94ac"/></linearGradient>
<radialGradient id="sh" cx="50%" cy="50%" r="50%"><stop offset="0" stop-color="#000" stop-opacity="0.45"/><stop offset="1" stop-color="#000" stop-opacity="0"/></radialGradient>
</defs></svg>
<div class="grp" style="left:5.5px;top:102.5px;width:158px;height:34.5px;background:#606060"><div class="dv" style="left:38.5px"></div><div class="dv" style="left:78.5px"></div><div class="dv" style="left:118.5px"></div></div>
<svg class="a" style="left:5px;top:102px" width="160" height="36" viewBox="0 0 160 36"><ellipse cx="27" cy="26" rx="9" ry="5" fill="url(#sh)"/><path d="M7.5 15 L18 19.5 L18 29.5 L8.5 25Z" fill="#a6bad0"/><path d="M7.5 15 L16 10 L26 13 L18 19.5Z" fill="#c9d8e8"/><path d="M18 19.5 L26 13 L25.500 24 L18 29.5Z" fill="#8299b2"/><ellipse cx="64" cy="27" rx="10" ry="4" fill="url(#sh)"/><circle cx="57" cy="19.5" r="8.8" fill="url(#gs)"/><ellipse cx="104" cy="27" rx="10" ry="4" fill="url(#sh)"/><path d="M89 10 L90.5 25.5 Q97 29.5 103.5 25.5 L105 10Z" fill="url(#gc)"/><ellipse cx="97" cy="10" rx="8" ry="3" fill="#c8d8e8"/><ellipse cx="143" cy="27" rx="8" ry="3.5" fill="url(#sh)"/><path d="M138 8 L130.5 25 Q138 30 146 25Z" fill="url(#gk)"/></svg>
<svg class="a" style="left:78.5px;top:131.5px" width="4" height="4" viewBox="0 0 4 4"><path d="M4 0V4H0Z" fill="#2e2e2e"/></svg><svg class="a" style="left:118.5px;top:131.5px" width="4" height="4" viewBox="0 0 4 4"><path d="M4 0V4H0Z" fill="#2e2e2e"/></svg>
<div class="grp" style="left:5.5px;top:141px;width:158px;height:34px;background:#606060"><div class="dv" style="left:38.5px"></div><div class="dv" style="left:78.5px"></div><div class="dv" style="left:118.5px"></div></div>
<svg class="a" style="left:5px;top:140px" width="160" height="36" viewBox="0 0 160 36"><ellipse cx="26" cy="26" rx="9" ry="4" fill="url(#sh)"/><ellipse cx="17.5" cy="18" rx="8" ry="8.5" transform="rotate(-35 17.5 18)" fill="none" stroke="url(#gs)" stroke-width="5.5"/><ellipse cx="17.5" cy="18" rx="8" ry="8.5" transform="rotate(-35 17.5 18)" fill="none" stroke="#a9bfd6" stroke-width="4.5"/><ellipse cx="16.5" cy="16.5" rx="7" ry="7.5" transform="rotate(-35 17.5 18)" fill="none" stroke="#dbe6f1" stroke-width="1.3" stroke-dasharray="14 40"/><ellipse cx="64" cy="27" rx="9" ry="4" fill="url(#sh)"/><path d="M52 9 Q60 8 56.5 13.5 Q50 17 55 19.5 Q66 15 64 21 Q52 22 52 26 Q55 30 63 27" fill="none" stroke="#7f97b0" stroke-width="5" stroke-linecap="round"/><path d="M52 9 Q60 8 56.5 13.5 Q50 17 55 19.5 Q66 15 64 21 Q52 22 52 26 Q55 30 63 27" fill="none" stroke="#c0d1e3" stroke-width="3" stroke-linecap="round"/><ellipse cx="108" cy="27" rx="8" ry="3.5" fill="url(#sh)"/><path d="M87.5 12 L96 8 L110 24 L93 30Z" fill="#c3d3e6"/><path d="M87.5 12 L96 8 L110 24 L93 30Z" fill="none" stroke="#3da85a" stroke-width="0.8"/><g fill="#3fb860"><rect x="85.5" y="10" width="4" height="4"/><rect x="94" y="6" width="4" height="4"/><rect x="108" y="22" width="4" height="4"/><rect x="91" y="28" width="4" height="4"/></g></svg>
<div class="t" style="left:132px;top:143px;font-size:22px;line-height:24px;color:#f0f0f0;letter-spacing:0">A</div>
<div class="t" style="left:142px;top:151px;font-size:19px;line-height:22px;color:#33c98a;letter-spacing:0;font-family:'Liberation Serif',serif;font-style:italic">&amp;</div>
<svg class="a" style="left:38.5px;top:169.5px" width="4" height="4" viewBox="0 0 4 4"><path d="M4 0V4H0Z" fill="#2e2e2e"/></svg><svg class="a" style="left:118.5px;top:169.5px" width="4" height="4" viewBox="0 0 4 4"><path d="M4 0V4H0Z" fill="#2e2e2e"/></svg>
<div class="grp" style="left:5.5px;top:179px;width:158.5px;height:21.5px;background:#606060"></div>
<div class="t" style="left:10.5px;top:183.5px;font-size:11px;line-height:15px;letter-spacing:-0.04px;color:#dcdcdc;">Item Menu: New Item</div>
<svg class="a" style="left:151.5px;top:188px" width="8" height="4.5" viewBox="0 0 8 4.5"><path d="M0 0H8 L4 4.5Z" fill="#dcdcdc"/></svg>
<div class="grp" style="left:5.5px;top:205px;width:158px;height:33.5px;background:#606060"><div class="dv" style="left:38.5px"></div><div class="dv" style="left:78.5px"></div><div class="dv" style="left:118.5px"></div></div>
<svg class="a" style="left:5px;top:202.7px" width="160" height="36" viewBox="0 0 160 36"><circle cx="20" cy="21" r="12" fill="none" stroke="#3c3c3c" stroke-width="1.2"/><path d="M13 16 l8 -3 l7 3 l-1 9 l-7 4 l-7 -4z" fill="#98a3ad"/><path d="M13 16 l8 -3 l7 3 l-8 3z" fill="#c0c8d0"/><path d="M9 26 Q8 10 20 9" fill="none" stroke="#e25c66" stroke-width="1.4"/><path d="M20 9 Q31 12 29 28" fill="none" stroke="#aab5ef" stroke-width="1.4"/><path d="M11 27 Q20 33 30 27" fill="none" stroke="#68d653" stroke-width="1.8"/><path d="M20 22V11" stroke="#68d653" stroke-width="1.5"/><path d="M20 22 L31 27" stroke="#e25c66" stroke-width="1.5"/><path d="M20 22 L9 27" stroke="#e8ecff" stroke-width="1.5"/><rect x="17.5" y="5.5" width="5" height="5" fill="#68d653"/><rect x="29" y="24.5" width="5" height="5" fill="#e25c66"/><rect x="6.5" y="24.5" width="5" height="5" fill="#aab5ef"/><path d="M49 18 l8 -3 l7 3 l-1 9 l-7 4 l-7 -4z" fill="#98a3ad"/><path d="M49 18 l8 -3 l7 3 l-8 3z" fill="#c0c8d0"/><path d="M57 22V8" stroke="#68d653" stroke-width="1.6"/><path d="M57 5 l2.5 5h-5z" fill="#68d653"/><path d="M57 22 L72 28" stroke="#e25c66" stroke-width="1.6"/><path d="M74.500 29 l-5.500 0.500 l1.800 -4.300z" fill="#e25c66"/><path d="M57 22 L47 30" stroke="#e8ecff" stroke-width="2"/><path d="M45 32 l2 -5 l3 3.500z" fill="#aab5ef"/><circle cx="99" cy="21.500" r="13" fill="none" stroke="#3c3c3c" stroke-width="1.2"/><path d="M92 17 l8 -3 l7 3 l-1 9 l-7 4 l-7 -4z" fill="#98a3ad"/><path d="M92 17 l8 -3 l7 3 l-8 3z" fill="#c0c8d0"/><path d="M90 30 Q86 12 99 9" fill="none" stroke="#e25c66" stroke-width="1.4"/><path d="M99 9 Q111 12 109 30" fill="none" stroke="#aab5ef" stroke-width="1.4"/><path d="M87 25 Q99 33 112 25" fill="none" stroke="#68d653" stroke-width="2.2"/><path d="M129 18 l8 -3 l7 3 l-1 9 l-7 4 l-7 -4z" fill="#98a3ad"/><path d="M129 18 l8 -3 l7 3 l-8 3z" fill="#c0c8d0"/><path d="M137 22V11" stroke="#68d653" stroke-width="1.6"/><rect x="134.5" y="5.500" width="5.500" height="5.500" fill="#68d653"/><path d="M137 22 L150 26" stroke="#e25c66" stroke-width="1.6"/><rect x="149" y="23.500" width="5.500" height="5.500" fill="#e25c66"/><path d="M137 22 L128 29" stroke="#e8ecff" stroke-width="2"/><rect x="124.500" y="27.500" width="5.500" height="5" fill="#aab5ef"/></svg>
<svg class="a" style="left:118.5px;top:233px" width="4" height="4" viewBox="0 0 4 4"><path d="M4 0V4H0Z" fill="#2e2e2e"/></svg><svg class="a" style="left:158px;top:233px" width="4" height="4" viewBox="0 0 4 4"><path d="M4 0V4H0Z" fill="#2e2e2e"/></svg>
<div class="grp" style="left:5.5px;top:243px;width:158.5px;height:44px;background:#606060"><div class="a" style="left:0;right:0;height:1px;top:22px;background:#4e4e4e"></div></div>
<div class="t" style="left:10.5px;top:247.0px;font-size:11px;line-height:15px;letter-spacing:-0.23px;color:#dcdcdc;">More Transforms</div>
<svg class="a" style="left:151.5px;top:251px" width="8" height="4.5" viewBox="0 0 8 4.5"><path d="M0 0H8 L4 4.5Z" fill="#dcdcdc"/></svg>
<div class="t" style="left:10.5px;top:270.0px;font-size:11px;line-height:15px;letter-spacing:-0.13px;color:#dcdcdc;">Center Selected</div>
<svg class="a" style="left:151.5px;top:274px" width="8" height="4.5" viewBox="0 0 8 4.5"><path d="M0 0H8 L4 4.5Z" fill="#dcdcdc"/></svg>
<div class="a" style="left:9px;top:292px;width:156px;height:1px;background:#333;"></div><div class="a" style="left:9px;top:293px;width:156px;height:1px;background:#555;"></div>
<div class="grp" style="left:5.5px;top:298.5px;width:158.5px;height:22.5px;background:#606060"></div>
<svg class="a" style="left:7px;top:300px" width="18" height="20" viewBox="0 0 18 20"><path d="M4 12 L10 18 M2.5 13.5 L5.5 10.5 M8.5 19.5 L11.5 16.5" stroke="#e8e8e8" stroke-width="1.2"/><path d="M17 2 L9 10 M7.500 11.500 L8 5.500 L13.500 11z" stroke="#2fd08a" stroke-width="2.6" fill="#2fd08a"/></svg>
<div class="t" style="left:28.5px;top:303.5px;font-size:11px;line-height:15px;letter-spacing:-0.32px;color:#dcdcdc;">Snaps and Precision</div>
<div class="a" style="left:159px;top:316px;width:3px;height:3px;background:none;border:1px solid #aaa"></div>
<div class="a" style="left:5.5px;top:326px;width:158.5px;height:15px;background:#3a3a3a;border-radius:4px"></div>
<svg class="a" style="left:10.5px;top:331px" width="6" height="5" viewBox="0 0 6 5"><path d="M0 0H6 L3 5Z" fill="#666"/></svg>
<div class="t" style="left:20.7px;top:326.5px;font-size:11px;line-height:15px;letter-spacing:-0.18px;color:#dcdcdc;">Add Geometry</div>
<div class="grp" style="left:5.5px;top:345px;width:158.5px;height:154px;background:#606060"><div class="a" style="left:0;right:0;height:1px;top:22px;background:#4e4e4e"></div><div class="a" style="left:0;right:0;height:1px;top:44px;background:#4e4e4e"></div><div class="a" style="left:0;right:0;height:1px;top:66px;background:#4e4e4e"></div><div class="a" style="left:0;right:0;height:1px;top:88px;background:#4e4e4e"></div><div class="a" style="left:0;right:0;height:1px;top:110px;background:#4e4e4e"></div><div class="a" style="left:0;right:0;height:1px;top:132px;background:#4e4e4e"></div></div>
<div class="t" style="left:28.5px;top:349.0px;font-size:11px;line-height:15px;letter-spacing:-0.50px;color:#dcdcdc;">SDS Subdivide</div>
<div class="t" style="left:152.6px;top:349.0px;font-size:11px;line-height:15px;letter-spacing:-0.56px;color:#8d8d8d;">D</div>
<div class="t" style="left:28.5px;top:371.9px;font-size:11px;line-height:15px;letter-spacing:-0.31px;color:#dcdcdc;">Bevel</div>
<div class="t" style="left:153.2px;top:371.9px;font-size:11px;line-height:15px;letter-spacing:-0.51px;color:#8d8d8d;">B</div>
<div class="t" style="left:28.5px;top:393.9px;font-size:11px;line-height:15px;letter-spacing:-0.06px;color:#dcdcdc;">Extrude</div>
<div class="t" style="left:129.3px;top:393.9px;font-size:11px;line-height:15px;letter-spacing:-0.33px;color:#8d8d8d;">Shift-X</div>
<div class="t" style="left:28.5px;top:415.9px;font-size:11px;line-height:15px;letter-spacing:-0.39px;color:#dcdcdc;">Bridge</div>
<div class="t" style="left:28.5px;top:437.9px;font-size:11px;line-height:15px;letter-spacing:-0.67px;color:#dcdcdc;">Slice</div>
<div class="t" style="left:128.7px;top:437.9px;font-size:11px;line-height:15px;letter-spacing:-0.34px;color:#8d8d8d;">Shift-C</div>
<div class="t" style="left:28.5px;top:459.9px;font-size:11px;line-height:15px;letter-spacing:-0.16px;color:#dcdcdc;">Smooth Shift</div>
<div class="t" style="left:28.5px;top:481.9px;font-size:11px;line-height:15px;letter-spacing:-0.38px;color:#dcdcdc;">Thicken</div>
<svg class="a" style="left:8px;top:347px" width="11" height="11" viewBox="0 0 20 20"><path d="M10 1 L18.5 4.5 L10 8.5 L1.5 4.5Z" fill="#9a9a9a"/><path d="M1.5 4.5 L10 8.5 L10 19 L2.5 14.5Z" fill="#808080"/><path d="M18.5 4.5 L10 8.5 L10 19 L17.5 14.5Z" fill="#6a6a6a"/></svg><svg class="a" style="left:13px;top:351px" width="13" height="13" viewBox="0 0 13 13"><circle cx="6.5" cy="6.5" r="6" fill="url(#gs)"/><path d="M1 5 Q6.500 8 12 5 M6.500 0.500 Q4.500 6.500 6.500 12.500" stroke="#fff" stroke-width="0.6" fill="none" opacity="0.7"/></svg>
<svg class="a" style="left:8px;top:370px" width="17" height="17" viewBox="0 0 20 20"><path d="M10 1 L18.5 4.5 L10 8.5 L1.5 4.5Z" fill="#c9dcf0"/><path d="M1.5 4.5 L10 8.5 L10 19 L2.5 14.5Z" fill="#a6c0dd"/><path d="M18.5 4.5 L10 8.5 L10 19 L17.5 14.5Z" fill="#35b86a"/></svg>
<svg class="a" style="left:8px;top:392px" width="17" height="17" viewBox="0 0 20 20"><path d="M10 1 L18.5 4.5 L10 8.5 L1.5 4.5Z" fill="#c9dcf0"/><path d="M1.5 4.5 L10 8.5 L10 19 L2.5 14.5Z" fill="#a6c0dd"/><path d="M18.5 4.5 L10 8.5 L10 19 L17.5 14.5Z" fill="#35b86a"/></svg>
<svg class="a" style="left:8px;top:413px" width="18" height="19" viewBox="0 0 18 19"><path d="M1 2 L8 1 L9 8 L3 9Z" fill="#b7cbe0"/><path d="M5 3 Q16 3 16 14 L9 15 Q9 9 3 9Z" fill="#35b86a"/><path d="M5 3 Q16 3 16 14 M7 6 Q12 7 12.500 14.500 M9 3.500 L7 8.500 M13 5.500 L9 10.500 M15.500 10 L9.500 12.500" stroke="#1f7a44" stroke-width="0.6" fill="none"/><path d="M9 14 L16 13.500 L16 18 L9 18.500Z" fill="#b7cbe0"/></svg>
<svg class="a" style="left:8px;top:436px" width="18" height="18" viewBox="0 0 18 18"><path d="M3 2 L16.500 0.500 L15 14 L1 16.500Z" fill="none" stroke="#e0609a" stroke-width="1.6"/><path d="M4 6 L10 4 L13 6 L12.500 12 L7 14 L4 12Z" fill="#a6c0dd"/><path d="M4 6 L10 4 L13 6 L7.500 8Z" fill="#c9dcf0"/></svg>
<svg class="a" style="left:7px;top:457px" width="20" height="20" viewBox="0 0 20 20"><ellipse cx="10" cy="5" rx="6" ry="3" fill="#d5e2f0"/><path d="M4 5 L3 10 L17 10 L16 5Z" fill="#8fa7c2"/><ellipse cx="10" cy="12" rx="9" ry="3.500" fill="#c3d3e6"/><path d="M1 12 Q10 20 19 12 L19 14 Q10 22 1 14Z" fill="#35b86a"/><path d="M6 5.500V10M10 6V10.500M14 5.500V10" stroke="#5d7690" stroke-width="0.7"/></svg>
<svg class="a" style="left:8px;top:479px" width="17" height="19" viewBox="0 0 17 19"><path d="M1 3 L6 1 L16 3 L15.500 15 L6 18 L1.500 15Z" fill="#dfeee6"/><path d="M1 3 L6 5 L6 18 L1.500 15Z" fill="#35b86a"/><path d="M6 5 L16 3 L15.500 15 L6 18Z" fill="none" stroke="#35b86a" stroke-width="2"/><rect x="8.500" y="8" width="4.500" height="5" fill="#222"/></svg>
<div class="a" style="left:9px;top:505px;width:156px;height:1px;background:#333;"></div><div class="a" style="left:9px;top:506px;width:156px;height:1px;background:#555;"></div>
<div class="grp" style="left:5.5px;top:511px;width:158.5px;height:22px;background:#606060"></div>
<div class="t" style="left:10.0px;top:515.5px;font-size:11px;line-height:15px;letter-spacing:-0.04px;color:#dcdcdc;">Edit</div>
<svg class="a" style="left:151.5px;top:520px" width="8" height="4.5" viewBox="0 0 8 4.5"><path d="M0 0H8 L4 4.5Z" fill="#dcdcdc"/></svg>
<div class="a" style="left:170px;top:102px;width:17px;height:476.5px;background:#565656;border-radius:4px;box-shadow:0 0 0 1px #3a3a3a"></div>
<div class="a" style="left:170px;top:102px;width:17px;height:38.5px;background:#f39c1f;border-radius:4px 4px 0 0"></div>
<div class="vt" style="left:170.2px;top:105.7px;width:15px;line-height:15px;color:#1a1000">Basic</div>
<div class="a" style="left:170px;top:140.5px;width:17px;height:1px;background:#444;"></div>
<div class="vt" style="left:170.2px;top:146.5px;width:15px;line-height:15px;color:#cfcfcf">Deform</div>
<div class="a" style="left:170px;top:192.5px;width:17px;height:1px;background:#444;"></div>
<div class="vt" style="left:170.2px;top:197.0px;width:15px;line-height:15px;color:#cfcfcf">Duplicate</div>
<div class="a" style="left:170px;top:251px;width:17px;height:1px;background:#444;"></div>
<div class="vt" style="left:170.2px;top:254.8px;width:15px;line-height:15px;color:#cfcfcf">Mesh Edit</div>
<div class="a" style="left:170px;top:311px;width:17px;height:1px;background:#444;"></div>
<div class="vt" style="left:170.2px;top:317.1px;width:15px;line-height:15px;color:#cfcfcf">Vertex</div>
<div class="a" style="left:170px;top:358.5px;width:17px;height:1px;background:#444;"></div>
<div class="vt" style="left:170.2px;top:363.8px;width:15px;line-height:15px;color:#cfcfcf">Edge</div>
<div class="a" style="left:170px;top:399px;width:17px;height:1px;background:#444;"></div>
<div class="vt" style="left:170.2px;top:403.7px;width:15px;line-height:15px;color:#cfcfcf">Polygon</div>
<div class="a" style="left:170px;top:452px;width:17px;height:1px;background:#444;"></div>
<div class="vt" style="left:170.2px;top:458.3px;width:15px;line-height:15px;color:#cfcfcf">Curve</div>
<div class="a" style="left:170px;top:498px;width:17px;height:1px;background:#444;"></div>
<div class="vt" style="left:170.2px;top:505.1px;width:15px;line-height:15px;color:#cfcfcf">UV</div>
<div class="a" style="left:170px;top:532px;width:17px;height:1px;background:#444;"></div>
<div class="vt" style="left:170.2px;top:536.7px;width:15px;line-height:15px;color:#cfcfcf">Fusion</div>
<div class="a" style="left:1px;top:605.5px;width:190px;height:1.5px;background:#1e1e1e;"></div>
<div class="a" style="left:1px;top:607px;width:190px;height:1px;background:#6a6a6a;"></div>
<svg class="a" style="left:2px;top:608px" width="4" height="4" viewBox="0 0 4 4"><path d="M0 0H4L0 4Z" fill="#2e2e2e"/></svg><svg class="a" style="left:186px;top:608px" width="4" height="4" viewBox="0 0 4 4"><path d="M0 0H4V4Z" fill="#2e2e2e"/></svg>
<div class="a" style="left:1611.5px;top:97px;width:307.5px;height:19px;background:#2a2a2a;"></div>
<div class="a" style="left:1615.5px;top:104.5px;width:7px;height:7px;border-radius:50%;background:radial-gradient(circle at 40% 40%,#000 40%,#333 100%)"></div>
<div class="a" style="left:1628px;top:101px;width:53px;height:15px;background:#484848;border-radius:6px 6px 0 0;"></div>
<svg class="a" style="left:1622px;top:101px" width="66" height="15" viewBox="0 0 66 15"><path d="M0 15 Q4 15 5.500 10 L7 4 Q8 0 12 0 H52 Q56 0 57.500 4 L60 11 Q61.500 15 66 15Z" fill="#484848"/></svg>
<svg class="a" style="left:1682px;top:101px" width="61" height="15" viewBox="0 0 61 15"><path d="M0 15 L4 3 Q5 0 8 0 H50 Q53 0 54 3 L59 15Z" fill="#3a3a3a"/></svg>
<svg class="a" style="left:1739.5px;top:101px" width="60.5" height="15" viewBox="0 0 60.5 15"><path d="M0 15 L4 3 Q5 0 8 0 H49.5 Q52.5 0 53.5 3 L58.5 15Z" fill="#3a3a3a"/></svg>
<svg class="a" style="left:1796px;top:101px" width="61" height="15" viewBox="0 0 61 15"><path d="M0 15 L4 3 Q5 0 8 0 H50 Q53 0 54 3 L59 15Z" fill="#3a3a3a"/></svg>
<div class="t" style="left:1640.5px;top:101.5px;font-size:11px;line-height:15px;letter-spacing:0.02px;color:#f3a533;">Items</div>
<div class="t" style="left:1691.0px;top:101.5px;font-size:11px;line-height:15px;letter-spacing:0.11px;color:#9c9c9c;">Mesh ...</div>
<div class="t" style="left:1749.5px;top:101.5px;font-size:11px;line-height:15px;letter-spacing:-0.34px;color:#9c9c9c;">Shading</div>
<div class="t" style="left:1808.0px;top:101.5px;font-size:11px;line-height:15px;letter-spacing:-0.27px;color:#9c9c9c;">Groups</div>
<svg class="a" style="left:1857.5px;top:106px" width="7" height="4" viewBox="0 0 7 4"><path d="M0 0H7 L3.5 4Z" fill="#b8b8b8"/></svg>
<svg class="a" style="left:1876px;top:102px" width="12" height="12" viewBox="0 0 12 12"><path d="M6.500 0.500H11.500V5.500Z M0.500 6.500V11.500H5.500Z" fill="#ababab"/><path d="M10 2 L7 5 M2 10 L5 7" stroke="#ababab" stroke-width="1.5"/></svg><svg class="a" style="left:1892.5px;top:102px" width="11" height="11" viewBox="0 0 20 20"><g fill="#ababab"><path d="M10 0.8l1.6 0.2 0.5 2.6 1.6 0.7 2.2-1.5 2.3 2.3-1.5 2.2 0.7 1.6 2.6 0.5v3.2l-2.6 0.5-0.7 1.6 1.5 2.2-2.3 2.3-2.2-1.5-1.6 0.7-0.5 2.6h-3.2l-0.5-2.6-1.6-0.7-2.2 1.5-2.3-2.3 1.5-2.2-0.7-1.6-2.6-0.5v-3.2l2.6-0.5 0.7-1.6-1.5-2.2 2.3-2.3 2.2 1.5 1.6-0.7 0.5-2.6z M10 6.6a3.4 3.4 0 1 0 0.01 0z" fill-rule="evenodd"/></g></svg><svg class="a" style="left:1911px;top:103px" width="5" height="8" viewBox="0 0 5 8"><path d="M0 0V8L4.500 4Z" fill="#ababab"/></svg>
<div class="grp" style="left:1616px;top:121px;width:128px;height:16.5px"><div class="dv" style="left:109px"></div></div>
<div class="t" style="left:1648.0px;top:123.0px;font-size:11px;line-height:15px;letter-spacing:-0.13px;color:#dcdcdc;">Add Item</div>
<svg class="a" style="left:1732px;top:127.5px" width="7" height="4" viewBox="0 0 7 4"><path d="M0 0H7 L3.5 4Z" fill="#dcdcdc"/></svg>
<div class="grp" style="left:1774px;top:121px;width:49px;height:16.5px"></div>
<div class="t" style="left:1783.0px;top:123.0px;font-size:11px;line-height:15px;letter-spacing:-0.10px;color:#dcdcdc;">Select</div>
<div class="grp" style="left:1827px;top:121px;width:48px;height:16.5px"></div>
<div class="t" style="left:1838.0px;top:123.0px;font-size:11px;line-height:15px;letter-spacing:-0.07px;color:#dcdcdc;">Filter</div>
<div class="grp" style="left:1879px;top:121px;width:16px;height:16.5px"></div>
<svg class="a" style="left:1881px;top:124px" width="12" height="12" viewBox="0 0 12 12"><path d="M4 2H12M4 6H12M4 10H12" stroke="#ddd" stroke-width="1.3"/><path d="M1 3 Q0 6 3 6 Q0 6 1 9" stroke="#ddd" stroke-width="1" fill="none"/></svg>
<div class="grp" style="left:1898px;top:121px;width:17px;height:16.5px"></div>
<svg class="a" style="left:1900px;top:125px" width="13" height="11" viewBox="0 0 13 11"><path d="M0.500 0.500H12.500L8 5.500V10.500L5 8.500V5.500Z" fill="#e4e4e4"/></svg>
<div class="a" style="left:1615px;top:141px;width:301px;height:410px;background:#3a3a3a;border-radius:5px"></div>
<div class="a" style="left:1616px;top:142px;width:285px;height:394px;background:#9299a1;border-radius:4px 0 0 0"></div>
<div class="a" style="left:1616px;top:142px;width:285px;height:18px;background:#66717d;border-radius:4px 0 0 0"></div>
<div class="a" style="left:1616px;top:160px;width:285px;height:18px;background:#979fa6;"></div>
<div class="a" style="left:1616px;top:178px;width:285px;height:18px;background:#495059;"></div>
<div class="a" style="left:1616px;top:178px;width:75px;height:18px;background:#414850;"></div>
<div class="a" style="left:1640px;top:142px;width:1px;height:394px;background:rgba(60,68,78,0.35);"></div>
<div class="a" style="left:1665px;top:142px;width:1px;height:394px;background:rgba(60,68,78,0.35);"></div>
<div class="a" style="left:1690px;top:142px;width:1px;height:394px;background:rgba(60,68,78,0.35);"></div>
<div class="a" style="left:1616px;top:159.5px;width:285px;height:1px;background:rgba(60,68,78,0.35);"></div>
<div class="a" style="left:1901px;top:142px;width:14px;height:394px;background:#636363;border-radius:0 5px 5px 0;box-shadow:inset 1px 0 0 #4a4a4a"></div>
<div class="a" style="left:1616px;top:536px;width:220px;height:14px;background:#636363;border-radius:0 0 5px 5px;box-shadow:inset 0 1px 0 #4a4a4a"></div>
<div class="a" style="left:1905px;top:336px;width:6px;height:6px;border-radius:50%;background:#777;box-shadow:inset 0 1px 1px #444"></div>
<div class="a" style="left:1723px;top:540px;width:6px;height:6px;border-radius:50%;background:#777;box-shadow:inset 0 1px 1px #444"></div>
<div class="a" style="left:1901.5px;top:536.5px;width:15.5px;height:15.5px;background:#484848;"></div>
<svg class="a" style="left:1619.5px;top:146px" width="14" height="10" viewBox="0 0 14 10"><path d="M0.500 5 Q7 -2.500 13.500 5 Q7 11 0.500 5Z" fill="#e8e8e8" stroke="#1a1a1a" stroke-width="1"/><circle cx="7" cy="5" r="2.800" fill="#111"/><path d="M0.500 3.500 Q7 -3.500 13.500 3.500" fill="none" stroke="#1a1a1a" stroke-width="1.2"/></svg>
<svg class="a" style="left:1646.5px;top:145px" width="12" height="12" viewBox="0 0 12 12"><path d="M1 6.500 Q6 4 11 5.500" stroke="#f2f2f2" stroke-width="2" fill="none"/><path d="M7.500 0.500 Q4.500 6 6.500 11.500" stroke="#f2f2f2" stroke-width="2" fill="none"/></svg>
<svg class="a" style="left:1671px;top:144px" width="13" height="13" viewBox="0 0 13 13"><path d="M6.500 7 V1" stroke="#3fcf4f" stroke-width="1.600"/><path d="M6.500 7 L12 10" stroke="#e8404a" stroke-width="1.600"/><path d="M6.500 7 L1 10" stroke="#4070f0" stroke-width="1.600"/></svg>
<div class="t" style="left:1705.0px;top:144.5px;font-size:11px;line-height:15px;letter-spacing:-0.59px;color:#c8d0da;">Name</div>
<svg class="a" style="left:1619.5px;top:164px" width="14" height="10" viewBox="0 0 14 10"><path d="M0.500 5 Q7 -2.500 13.500 5 Q7 11 0.500 5Z" fill="#e8e8e8" stroke="#1a1a1a" stroke-width="1"/><circle cx="7" cy="5" r="2.800" fill="#111"/><path d="M0.500 3.500 Q7 -3.500 13.500 3.500" fill="none" stroke="#1a1a1a" stroke-width="1.2"/></svg>
<svg class="a" style="left:1619.5px;top:182px" width="14" height="10" viewBox="0 0 14 10"><path d="M0.500 5 Q7 -2.500 13.500 5 Q7 11 0.500 5Z" fill="#e8e8e8" stroke="#1a1a1a" stroke-width="1"/><circle cx="7" cy="5" r="2.800" fill="#111"/><path d="M0.500 3.500 Q7 -3.500 13.500 3.500" fill="none" stroke="#1a1a1a" stroke-width="1.2"/></svg>
<svg class="a" style="left:1619.5px;top:200px" width="14" height="10" viewBox="0 0 14 10"><path d="M0.500 5 Q7 -2.500 13.500 5 Q7 11 0.500 5Z" fill="#e8e8e8" stroke="#1a1a1a" stroke-width="1"/><circle cx="7" cy="5" r="2.800" fill="#111"/><path d="M0.500 3.500 Q7 -3.500 13.500 3.500" fill="none" stroke="#1a1a1a" stroke-width="1.2"/></svg>
<svg class="a" style="left:1619.5px;top:218px" width="14" height="10" viewBox="0 0 14 10"><path d="M0.500 5 Q7 -2.500 13.500 5 Q7 11 0.500 5Z" fill="#e8e8e8" stroke="#1a1a1a" stroke-width="1"/><circle cx="7" cy="5" r="2.800" fill="#111"/><path d="M0.500 3.500 Q7 -3.500 13.500 3.500" fill="none" stroke="#1a1a1a" stroke-width="1.2"/></svg>
<svg class="a" style="left:1619.5px;top:236px" width="14" height="10" viewBox="0 0 14 10"><path d="M0.500 5 Q7 -2.500 13.500 5 Q7 11 0.500 5Z" fill="#e8e8e8" stroke="#1a1a1a" stroke-width="1"/><circle cx="7" cy="5" r="2.800" fill="#111"/><path d="M0.500 3.500 Q7 -3.500 13.500 3.500" fill="none" stroke="#1a1a1a" stroke-width="1.2"/></svg>
<svg class="a" style="left:1619.5px;top:254px" width="14" height="10" viewBox="0 0 14 10"><path d="M0.500 5 Q7 -2.500 13.500 5 Q7 11 0.500 5Z" fill="#e8e8e8" stroke="#1a1a1a" stroke-width="1"/><circle cx="7" cy="5" r="2.800" fill="#111"/><path d="M0.500 3.500 Q7 -3.500 13.500 3.500" fill="none" stroke="#1a1a1a" stroke-width="1.2"/></svg>
<svg class="a" style="left:1646.5px;top:181px" width="12" height="12" viewBox="0 0 12 12"><path d="M1 6.500 Q6 4 11 5.500" stroke="#f3a533" stroke-width="2" fill="none"/><path d="M7.500 0.500 Q4.500 6 6.500 11.500" stroke="#f3a533" stroke-width="2" fill="none"/></svg>
<svg class="a" style="left:1695.5px;top:166.5px" width="6" height="5.5" viewBox="0 0 6 5.5"><path d="M0 0H6 L3 5.5Z" fill="#4a4f56"/></svg>
<div class="a" style="left:1698px;top:174px;width:0;height:103px;border-left:1px dotted #555c64"></div>
<div class="a" style="left:1699px;top:187px;width:6px;height:0;border-top:1px dotted #555c64"></div>
<div class="a" style="left:1706px;top:186px;width:3px;height:3px;background:#b8c0c8;"></div>
<div class="a" style="left:1699px;top:205px;width:6px;height:0;border-top:1px dotted #555c64"></div>
<div class="a" style="left:1706px;top:204px;width:3px;height:3px;background:#767e86;"></div>
<div class="a" style="left:1699px;top:223px;width:6px;height:0;border-top:1px dotted #555c64"></div>
<div class="a" style="left:1706px;top:222px;width:3px;height:3px;background:#767e86;"></div>
<div class="a" style="left:1699px;top:241px;width:6px;height:0;border-top:1px dotted #555c64"></div>
<div class="a" style="left:1706px;top:240px;width:3px;height:3px;background:#767e86;"></div>
<div class="a" style="left:1699px;top:259px;width:6px;height:0;border-top:1px dotted #555c64"></div>
<div class="a" style="left:1706px;top:258px;width:3px;height:3px;background:#767e86;"></div>
<div class="a" style="left:1699px;top:277px;width:6px;height:0;border-top:1px dotted #555c64"></div>
<div class="a" style="left:1706px;top:276px;width:3px;height:3px;background:#767e86;"></div>
<svg class="a" style="left:1715px;top:162px" width="14" height="13" viewBox="0 0 14 13"><path d="M1 5.500 L12.500 3 L13 12 H1Z" fill="#222"/><path d="M0.500 4.500 L12 0.500 L12.800 2.800 L1.300 6.800Z" fill="#eee" stroke="#222" stroke-width="0.7"/><path d="M3 3.700 L5 5.500 M6 2.600 L8 4.400 M9 1.500 L11 3.300" stroke="#222" stroke-width="1.200"/><path d="M2 8.500H12" stroke="#888" stroke-width="0.8"/></svg>
<div class="t" style="left:1731.0px;top:160.8px;font-size:11px;line-height:15px;letter-spacing:0.43px;color:#0c0c0c;font-weight:bold;">CoffeeMakerScene.lxo</div>
<svg class="a" style="left:1726.5px;top:179.5px" width="14" height="14" viewBox="0 0 20 20"><path d="M10 1 L18.5 4.5 L10 8.5 L1.5 4.5Z" fill="#bccde0"/><path d="M1.5 4.5 L10 8.5 L10 19 L2.5 14.5Z" fill="#a3b6ca"/><path d="M18.5 4.5 L10 8.5 L10 19 L17.5 14.5Z" fill="#8498ae"/><path d="M10 1 L18.5 4.5 L17.5 14.5 L10 19 L2.5 14.5 L1.5 4.5Z M1.5 4.5 L10 8.5 L18.5 4.5 M10 8.5V19" fill="none" stroke="#3f4852" stroke-width="1"/></svg>
<div class="t" style="left:1742.7px;top:179.4px;font-size:11px;line-height:15px;letter-spacing:0.06px;color:#f3a533;">CoffeePot</div>
<svg class="a" style="left:1726.5px;top:197.5px" width="14" height="14" viewBox="0 0 20 20"><path d="M10 1 L18.5 4.5 L10 8.5 L1.5 4.5Z" fill="#bccde0"/><path d="M1.5 4.5 L10 8.5 L10 19 L2.5 14.5Z" fill="#a3b6ca"/><path d="M18.5 4.5 L10 8.5 L10 19 L17.5 14.5Z" fill="#8498ae"/><path d="M10 1 L18.5 4.5 L17.5 14.5 L10 19 L2.5 14.5 L1.5 4.5Z M1.5 4.5 L10 8.5 L18.5 4.5 M10 8.5V19" fill="none" stroke="#3f4852" stroke-width="1"/></svg>
<div class="t" style="left:1742.7px;top:197.4px;font-size:11px;line-height:15px;letter-spacing:-0.13px;color:#0c0c0c;">Coffee Maker</div>
<svg class="a" style="left:1726.5px;top:215.5px" width="14" height="14" viewBox="0 0 20 20"><path d="M10 1 L18.5 4.5 L10 8.5 L1.5 4.5Z" fill="#bccde0"/><path d="M1.5 4.5 L10 8.5 L10 19 L2.5 14.5Z" fill="#a3b6ca"/><path d="M18.5 4.5 L10 8.5 L10 19 L17.5 14.5Z" fill="#8498ae"/><path d="M10 1 L18.5 4.5 L17.5 14.5 L10 19 L2.5 14.5 L1.5 4.5Z M1.5 4.5 L10 8.5 L18.5 4.5 M10 8.5V19" fill="none" stroke="#3f4852" stroke-width="1"/></svg>
<div class="t" style="left:1742.7px;top:215.4px;font-size:11px;line-height:15px;letter-spacing:-0.26px;color:#0c0c0c;">Cyclorama Wall</div>
<svg class="a" style="left:1727px;top:235px" width="14" height="12" viewBox="0 0 14 12"><rect x="0.500" y="2.500" width="12" height="8.500" rx="1.500" fill="#e8e8e8" stroke="#222" stroke-width="0.9"/><rect x="3" y="0.800" width="4" height="2" fill="#222"/><circle cx="8" cy="7" r="3.200" fill="#111" stroke="#555" stroke-width="0.8"/></svg>
<svg class="a" style="left:1743px;top:234.5px" width="13" height="13" viewBox="0 0 13 13"><defs><radialGradient id="gb" cx="38%" cy="30%" r="70%"><stop offset="0" stop-color="#d8d8ff"/><stop offset="0.450" stop-color="#6a68d0"/><stop offset="1" stop-color="#1c1a60"/></radialGradient></defs><circle cx="6.500" cy="6.500" r="6.300" fill="url(#gb)"/></svg>
<div class="t" style="left:1759.0px;top:233.4px;font-size:11px;line-height:15px;letter-spacing:0.50px;color:#0c0c0c;font-weight:bold;">Camera</div>
<svg class="a" style="left:1727px;top:253.5px" width="14" height="12" viewBox="0 0 14 12"><path d="M0.500 1 H4.500 L5.500 2.500 H10 V4 H3.500 L0.500 10.500Z" fill="#f4f4f4" stroke="#222" stroke-width="0.8"/><path d="M3.500 4 H13.500 L10 11 H0.500Z" fill="#777" stroke="#222" stroke-width="0.8"/></svg>
<div class="t" style="left:1742.7px;top:251.4px;font-size:11px;line-height:15px;letter-spacing:-0.08px;color:#0c0c0c;">Texture Group</div>
<svg class="a" style="left:1727px;top:271px" width="14" height="13" viewBox="0 0 14 13"><path d="M1 3 L5 1 L12 7 L12.500 11 L8 12 L2 6.500Z" fill="#2a2a2a"/><path d="M8 7.500 L12.300 6.800 L12.500 11.300 L8.500 12Z" fill="#f7ee90"/><path d="M2 3.500 L5 2.200" stroke="#eee" stroke-width="1.200"/></svg>
<div class="t" style="left:1742.7px;top:269.4px;font-size:11px;line-height:15px;letter-spacing:-0.17px;color:#0c0c0c;">Directional Light</div>
<div class="a" style="left:1611.5px;top:554.5px;width:307.5px;height:20.5px;background:#2a2a2a;"></div>
<div class="a" style="left:1615.1px;top:562.5px;width:7px;height:7px;border-radius:50%;background:radial-gradient(circle at 40% 40%,#000 40%,#333 100%)"></div>
<svg class="a" style="left:1623px;top:559px" width="72" height="16" viewBox="0 0 72 16"><path d="M0 16 Q4 16 5.500 11 L7.500 4 Q8.500 0 12.500 0 H59 Q63 0 64.500 4 L67 12 Q68.500 16 72 16Z" fill="#484848"/></svg>
<svg class="a" style="left:1691.6px;top:560px" width="64.1" height="15" viewBox="0 0 64.1 15"><path d="M0 15 L4 3 Q5 0 8 0 H53.1 Q56.1 0 57.1 3 L62.1 15Z" fill="#3a3a3a"/></svg>
<svg class="a" style="left:1753.6px;top:560px" width="58.4" height="15" viewBox="0 0 58.4 15"><path d="M0 15 L4 3 Q5 0 8 0 H47.4 Q50.4 0 51.4 3 L56.4 15Z" fill="#3a3a3a"/></svg>
<div class="t" style="left:1634.6px;top:560.0px;font-size:11px;line-height:15px;letter-spacing:-0.12px;color:#f3a533;">Properties</div>
<div class="t" style="left:1700.5px;top:560.0px;font-size:11px;line-height:15px;letter-spacing:-0.38px;color:#9c9c9c;">Channels</div>
<div class="t" style="left:1770.5px;top:560.0px;font-size:11px;line-height:15px;letter-spacing:-0.33px;color:#9c9c9c;">Lists</div>
<svg class="a" style="left:1812.5px;top:563.5px" width="7" height="7" viewBox="0 0 7 7"><path d="M3.500 0V7M0 3.500H7" stroke="#b0b0b0" stroke-width="1.1"/></svg>
<svg class="a" style="left:1876px;top:560.5px" width="12" height="12" viewBox="0 0 12 12"><path d="M6.500 0.500H11.500V5.500Z M0.500 6.500V11.500H5.500Z" fill="#ababab"/><path d="M10 2 L7 5 M2 10 L5 7" stroke="#ababab" stroke-width="1.5"/></svg><svg class="a" style="left:1892.5px;top:560.5px" width="11" height="11" viewBox="0 0 20 20"><g fill="#ababab"><path d="M10 0.8l1.6 0.2 0.5 2.6 1.6 0.7 2.2-1.5 2.3 2.3-1.5 2.2 0.7 1.6 2.6 0.5v3.2l-2.6 0.5-0.7 1.6 1.5 2.2-2.3 2.3-2.2-1.5-1.6 0.7-0.5 2.6h-3.2l-0.5-2.6-1.6-0.7-2.2 1.5-2.3-2.3 1.5-2.2-0.7-1.6-2.6-0.5v-3.2l2.6-0.5 0.7-1.6-1.5-2.2 2.3-2.3 2.2 1.5 1.6-0.7 0.5-2.6z M10 6.6a3.4 3.4 0 1 0 0.01 0z" fill-rule="evenodd"/></g></svg><svg class="a" style="left:1911px;top:561.5px" width="5" height="8" viewBox="0 0 5 8"><path d="M0 0V8L4.500 4Z" fill="#ababab"/></svg>
<div class="t" style="left:1686.5px;top:582.0px;font-size:11px;line-height:15px;letter-spacing:-0.22px;color:#dcdcdc;">Name</div>
<div class="a" style="left:1720px;top:580px;width:172px;height:17px;background:#909aa3;border-radius:5px;box-shadow:0 0 0 1px #383838"></div>
<div class="t" style="left:1729.4px;top:582.0px;font-size:11px;line-height:15px;letter-spacing:0.04px;color:#0c0c0c;">CoffeePot</div>
<div class="a" style="left:1616px;top:601px;width:276.5px;height:16px;background:#3a3a3a;border-radius:5px"></div><svg class="a" style="left:1621px;top:606.5px" width="6" height="5" viewBox="0 0 6 5"><path d="M0 0H6 L3 5Z" fill="#666"/></svg><div class="t" style="left:1631.5px;top:602.5px;font-size:11px;line-height:15px;letter-spacing:-0.21px;color:#dcdcdc;">Transform</div>
<div class="a" style="left:1720px;top:621px;width:172px;height:51.6px;background:#5c5c5c;border-radius:5px;box-shadow:0 0 0 1px #383838;overflow:hidden"></div><div class="a" style="left:1735px;top:621px;width:157px;height:51.6px;background:#909aa3;border-radius:0 5px 5px 0"></div><div class="a" style="left:1877px;top:621px;width:1px;height:51.6px;background:#7d8791;"></div><div class="a" style="left:1722.7px;top:625.5px;width:8px;height:8px;border-radius:50%;background:#8a8a8a;box-shadow:0 0 0 1px #2e2e2e, inset 0 1px 1px #6a6a6a"></div><div class="t" style="left:1667.4px;top:623.2px;font-size:11px;line-height:15px;letter-spacing:-0.20px;color:#dcdcdc;">Position X</div><div class="t" style="left:1745.0px;top:623.2px;font-size:11px;line-height:15px;letter-spacing:-0.26px;color:#0c0c0c;">-42.5256 mm</div><svg class="a" style="left:1863px;top:624.2px" width="10" height="11" viewBox="0 0 10 11"><ellipse cx="5" cy="5.500" rx="3.700" ry="4.700" fill="none" stroke="#7f8993" stroke-width="2.400"/></svg><svg class="a" style="left:1879px;top:625.7px" width="11" height="8" viewBox="0 0 11 8"><path d="M4.500 0V8L0 4Z M6.500 0V8L11 4Z" fill="#d8dde2"/><path d="M5.500 0V8" stroke="#7a848e" stroke-width="0.8"/></svg><div class="a" style="left:1720px;top:638px;width:15px;height:1px;background:#4c4c4c;"></div><div class="a" style="left:1735px;top:638px;width:157px;height:1px;background:#959fa8;"></div><div class="a" style="left:1722.7px;top:642.7px;width:8px;height:8px;border-radius:50%;background:#8a8a8a;box-shadow:0 0 0 1px #2e2e2e, inset 0 1px 1px #6a6a6a"></div><div class="t" style="left:1708.0px;top:640.4px;font-size:11px;line-height:15px;letter-spacing:-0.29px;color:#dcdcdc;">Y</div><div class="t" style="left:1745.0px;top:640.4px;font-size:11px;line-height:15px;letter-spacing:-0.32px;color:#0c0c0c;">53.2397 mm</div><svg class="a" style="left:1863px;top:641.4px" width="10" height="11" viewBox="0 0 10 11"><ellipse cx="5" cy="5.500" rx="3.700" ry="4.700" fill="none" stroke="#7f8993" stroke-width="2.400"/></svg><svg class="a" style="left:1879px;top:642.9px" width="11" height="8" viewBox="0 0 11 8"><path d="M4.500 0V8L0 4Z M6.500 0V8L11 4Z" fill="#d8dde2"/><path d="M5.500 0V8" stroke="#7a848e" stroke-width="0.8"/></svg><div class="a" style="left:1720px;top:655px;width:15px;height:1px;background:#4c4c4c;"></div><div class="a" style="left:1735px;top:655px;width:157px;height:1px;background:#959fa8;"></div><div class="a" style="left:1722.7px;top:659.9px;width:8px;height:8px;border-radius:50%;background:#8a8a8a;box-shadow:0 0 0 1px #2e2e2e, inset 0 1px 1px #6a6a6a"></div><div class="t" style="left:1708.5px;top:657.6px;font-size:11px;line-height:15px;letter-spacing:-0.27px;color:#dcdcdc;">Z</div><div class="t" style="left:1745.0px;top:657.6px;font-size:11px;line-height:15px;letter-spacing:-0.32px;color:#0c0c0c;">14.8031 mm</div><svg class="a" style="left:1863px;top:658.6px" width="10" height="11" viewBox="0 0 10 11"><ellipse cx="5" cy="5.500" rx="3.700" ry="4.700" fill="none" stroke="#7f8993" stroke-width="2.400"/></svg><svg class="a" style="left:1879px;top:660.1px" width="11" height="8" viewBox="0 0 11 8"><path d="M4.500 0V8L0 4Z M6.500 0V8L11 4Z" fill="#d8dde2"/><path d="M5.500 0V8" stroke="#7a848e" stroke-width="0.8"/></svg>
<div class="a" style="left:1720px;top:676px;width:172px;height:68.8px;background:#5c5c5c;border-radius:5px;box-shadow:0 0 0 1px #383838;overflow:hidden"></div><div class="a" style="left:1735px;top:676px;width:157px;height:51.6px;background:#909aa3;border-radius:0 5px 0 0"></div><div class="a" style="left:1877px;top:676px;width:1px;height:51.6px;background:#7d8791;"></div><div class="a" style="left:1722.7px;top:680.5px;width:8px;height:8px;border-radius:50%;background:#8a8a8a;box-shadow:0 0 0 1px #2e2e2e, inset 0 1px 1px #6a6a6a"></div><div class="t" style="left:1665.7px;top:678.2px;font-size:11px;line-height:15px;letter-spacing:-0.21px;color:#dcdcdc;">Rotation X</div><div class="t" style="left:1745.0px;top:678.2px;font-size:11px;line-height:15px;letter-spacing:0.24px;color:#0c0c0c;">0.0 °</div><svg class="a" style="left:1863px;top:679.2px" width="10" height="11" viewBox="0 0 10 11"><ellipse cx="5" cy="5.500" rx="3.700" ry="4.700" fill="none" stroke="#7f8993" stroke-width="2.400"/></svg><svg class="a" style="left:1879px;top:680.7px" width="11" height="8" viewBox="0 0 11 8"><path d="M4.500 0V8L0 4Z M6.500 0V8L11 4Z" fill="#d8dde2"/><path d="M5.500 0V8" stroke="#7a848e" stroke-width="0.8"/></svg><div class="a" style="left:1720px;top:693px;width:15px;height:1px;background:#4c4c4c;"></div><div class="a" style="left:1735px;top:693px;width:157px;height:1px;background:#959fa8;"></div><div class="a" style="left:1722.7px;top:697.7px;width:8px;height:8px;border-radius:50%;background:#8a8a8a;box-shadow:0 0 0 1px #2e2e2e, inset 0 1px 1px #6a6a6a"></div><div class="t" style="left:1708.0px;top:695.4px;font-size:11px;line-height:15px;letter-spacing:-0.29px;color:#dcdcdc;">Y</div><div class="t" style="left:1745.0px;top:695.4px;font-size:11px;line-height:15px;letter-spacing:0.13px;color:#0c0c0c;">-130.2 °</div><svg class="a" style="left:1863px;top:696.4px" width="10" height="11" viewBox="0 0 10 11"><ellipse cx="5" cy="5.500" rx="3.700" ry="4.700" fill="none" stroke="#7f8993" stroke-width="2.400"/></svg><svg class="a" style="left:1879px;top:697.9px" width="11" height="8" viewBox="0 0 11 8"><path d="M4.500 0V8L0 4Z M6.500 0V8L11 4Z" fill="#d8dde2"/><path d="M5.500 0V8" stroke="#7a848e" stroke-width="0.8"/></svg><div class="a" style="left:1720px;top:710px;width:15px;height:1px;background:#4c4c4c;"></div><div class="a" style="left:1735px;top:710px;width:157px;height:1px;background:#959fa8;"></div><div class="a" style="left:1722.7px;top:714.9px;width:8px;height:8px;border-radius:50%;background:#8a8a8a;box-shadow:0 0 0 1px #2e2e2e, inset 0 1px 1px #6a6a6a"></div><div class="t" style="left:1708.5px;top:712.6px;font-size:11px;line-height:15px;letter-spacing:-0.27px;color:#dcdcdc;">Z</div><div class="t" style="left:1745.0px;top:712.6px;font-size:11px;line-height:15px;letter-spacing:0.24px;color:#0c0c0c;">0.0 °</div><svg class="a" style="left:1863px;top:713.6px" width="10" height="11" viewBox="0 0 10 11"><ellipse cx="5" cy="5.500" rx="3.700" ry="4.700" fill="none" stroke="#7f8993" stroke-width="2.400"/></svg><svg class="a" style="left:1879px;top:715.1px" width="11" height="8" viewBox="0 0 11 8"><path d="M4.500 0V8L0 4Z M6.500 0V8L11 4Z" fill="#d8dde2"/><path d="M5.500 0V8" stroke="#7a848e" stroke-width="0.8"/></svg>
<div class="a" style="left:1720px;top:727.5px;width:15px;height:1px;background:#4c4c4c;"></div>
<div class="a" style="left:1735px;top:727.6px;width:157px;height:17.2px;background:#5e5e5e;border-radius:0 0 5px 0"></div>
<div class="a" style="left:1722.7px;top:731.5px;width:8px;height:8px;border-radius:50%;background:#8a8a8a;box-shadow:0 0 0 1px #2e2e2e, inset 0 1px 1px #6a6a6a"></div>
<div class="t" style="left:1688.0px;top:729.5px;font-size:11px;line-height:15px;letter-spacing:-0.23px;color:#dcdcdc;">Order</div>
<div class="t" style="left:1740.0px;top:729.5px;font-size:11px;line-height:15px;letter-spacing:-1.47px;color:#dcdcdc;">ZXY</div>
<svg class="a" style="left:1879.6px;top:734px" width="7.5" height="4.5" viewBox="0 0 7.5 4.5"><path d="M0 0H7.5 L3.75 4.5Z" fill="#dcdcdc"/></svg>
<div class="a" style="left:1720px;top:748px;width:172px;height:51.6px;background:#5c5c5c;border-radius:5px;box-shadow:0 0 0 1px #383838;overflow:hidden"></div><div class="a" style="left:1735px;top:748px;width:157px;height:51.6px;background:#909aa3;border-radius:0 5px 5px 0"></div><div class="a" style="left:1877px;top:748px;width:1px;height:51.6px;background:#7d8791;"></div><div class="a" style="left:1722.7px;top:752.5px;width:8px;height:8px;border-radius:50%;background:#5a5a5a;box-shadow:0 0 0 1px #4a4a4a, inset 0 1px 1px #4c4c4c"></div><div class="t" style="left:1678.6px;top:750.2px;font-size:11px;line-height:15px;letter-spacing:-0.22px;color:#dcdcdc;">Scale X</div><div class="t" style="left:1745.0px;top:750.2px;font-size:11px;line-height:15px;letter-spacing:0.14px;color:#0c0c0c;">100.0 %</div><svg class="a" style="left:1863px;top:751.2px" width="10" height="11" viewBox="0 0 10 11"><ellipse cx="5" cy="5.500" rx="3.700" ry="4.700" fill="none" stroke="#7f8993" stroke-width="2.400"/></svg><svg class="a" style="left:1879px;top:752.7px" width="11" height="8" viewBox="0 0 11 8"><path d="M4.500 0V8L0 4Z M6.500 0V8L11 4Z" fill="#d8dde2"/><path d="M5.500 0V8" stroke="#7a848e" stroke-width="0.8"/></svg><div class="a" style="left:1720px;top:765px;width:15px;height:1px;background:#4c4c4c;"></div><div class="a" style="left:1735px;top:765px;width:157px;height:1px;background:#959fa8;"></div><div class="a" style="left:1722.7px;top:769.7px;width:8px;height:8px;border-radius:50%;background:#5a5a5a;box-shadow:0 0 0 1px #4a4a4a, inset 0 1px 1px #4c4c4c"></div><div class="t" style="left:1708.0px;top:767.4px;font-size:11px;line-height:15px;letter-spacing:-0.29px;color:#dcdcdc;">Y</div><div class="t" style="left:1745.0px;top:767.4px;font-size:11px;line-height:15px;letter-spacing:0.14px;color:#0c0c0c;">100.0 %</div><svg class="a" style="left:1863px;top:768.4px" width="10" height="11" viewBox="0 0 10 11"><ellipse cx="5" cy="5.500" rx="3.700" ry="4.700" fill="none" stroke="#7f8993" stroke-width="2.400"/></svg><svg class="a" style="left:1879px;top:769.9px" width="11" height="8" viewBox="0 0 11 8"><path d="M4.500 0V8L0 4Z M6.500 0V8L11 4Z" fill="#d8dde2"/><path d="M5.500 0V8" stroke="#7a848e" stroke-width="0.8"/></svg><div class="a" style="left:1720px;top:782px;width:15px;height:1px;background:#4c4c4c;"></div><div class="a" style="left:1735px;top:782px;width:157px;height:1px;background:#959fa8;"></div><div class="a" style="left:1722.7px;top:786.9px;width:8px;height:8px;border-radius:50%;background:#5a5a5a;box-shadow:0 0 0 1px #4a4a4a, inset 0 1px 1px #4c4c4c"></div><div class="t" style="left:1708.5px;top:784.6px;font-size:11px;line-height:15px;letter-spacing:-0.27px;color:#dcdcdc;">Z</div><div class="t" style="left:1745.0px;top:784.6px;font-size:11px;line-height:15px;letter-spacing:0.14px;color:#0c0c0c;">100.0 %</div><svg class="a" style="left:1863px;top:785.6px" width="10" height="11" viewBox="0 0 10 11"><ellipse cx="5" cy="5.500" rx="3.700" ry="4.700" fill="none" stroke="#7f8993" stroke-width="2.400"/></svg><svg class="a" style="left:1879px;top:787.1px" width="11" height="8" viewBox="0 0 11 8"><path d="M4.500 0V8L0 4Z M6.500 0V8L11 4Z" fill="#d8dde2"/><path d="M5.500 0V8" stroke="#7a848e" stroke-width="0.8"/></svg>
<div class="grp" style="left:1735px;top:802px;width:157px;height:69px"><div class="a" style="left:0;right:0;height:1px;top:17.25px;background:#4e4e4e"></div><div class="a" style="left:0;right:0;height:1px;top:34.5px;background:#4e4e4e"></div><div class="a" style="left:0;right:0;height:1px;top:51.75px;background:#4e4e4e"></div></div>
<div class="t" style="left:1739.5px;top:805.2px;font-size:11px;line-height:15px;letter-spacing:-0.05px;color:#dcdcdc;">Reset</div>
<svg class="a" style="left:1879.8px;top:809.7px" width="7.5" height="4.5" viewBox="0 0 7.5 4.5"><path d="M0 0H7.5 L3.75 4.5Z" fill="#dcdcdc"/></svg>
<div class="t" style="left:1739.5px;top:822.4px;font-size:11px;line-height:15px;letter-spacing:-0.29px;color:#dcdcdc;">Freeze</div>
<svg class="a" style="left:1879.8px;top:826.9px" width="7.5" height="4.5" viewBox="0 0 7.5 4.5"><path d="M0 0H7.5 L3.75 4.5Z" fill="#dcdcdc"/></svg>
<div class="t" style="left:1739.5px;top:839.6px;font-size:11px;line-height:15px;letter-spacing:-0.28px;color:#dcdcdc;">Zero</div>
<svg class="a" style="left:1879.8px;top:844.1px" width="7.5" height="4.5" viewBox="0 0 7.5 4.5"><path d="M0 0H7.5 L3.75 4.5Z" fill="#dcdcdc"/></svg>
<div class="t" style="left:1739.5px;top:856.8px;font-size:11px;line-height:15px;letter-spacing:-0.36px;color:#dcdcdc;">Add</div>
<svg class="a" style="left:1879.8px;top:861.3px" width="7.5" height="4.5" viewBox="0 0 7.5 4.5"><path d="M0 0H7.5 L3.75 4.5Z" fill="#dcdcdc"/></svg>
<div class="a" style="left:1616px;top:875px;width:276.5px;height:16px;background:#3a3a3a;border-radius:5px"></div><svg class="a" style="left:1621px;top:880.5px" width="6" height="5" viewBox="0 0 6 5"><path d="M0 0H6 L3 5Z" fill="#666"/></svg><div class="t" style="left:1631.5px;top:876.5px;font-size:11px;line-height:15px;letter-spacing:-0.53px;color:#dcdcdc;">Mesh</div>
<div class="a" style="left:1720px;top:895px;width:172px;height:17px;background:#5e5e5e;border-radius:5px;box-shadow:0 0 0 1px #383838"></div>
<div class="a" style="left:1735px;top:895px;width:1px;height:17px;background:#505050;"></div><div class="a" style="left:1722.7px;top:899px;width:8px;height:8px;border-radius:50%;background:#5a5a5a;box-shadow:0 0 0 1px #4a4a4a, inset 0 1px 1px #4c4c4c"></div>
<div class="t" style="left:1680.3px;top:897.0px;font-size:11px;line-height:15px;letter-spacing:-0.24px;color:#dcdcdc;">Render</div>
<div class="t" style="left:1739.5px;top:897.0px;font-size:11px;line-height:15px;letter-spacing:0.06px;color:#dcdcdc;">Default</div>
<svg class="a" style="left:1879.8px;top:901.5px" width="7.5" height="4.5" viewBox="0 0 7.5 4.5"><path d="M0 0H7.5 L3.75 4.5Z" fill="#dcdcdc"/></svg>
<div class="a" style="left:1720px;top:916px;width:172px;height:17px;background:#5c5c5c;border-radius:5px;box-shadow:0 0 0 1px #383838"></div>
<div class="a" style="left:1735px;top:916px;width:157px;height:17px;background:#909aa3;border-radius:0 5px 5px 0"></div>
<div class="a" style="left:1877px;top:916px;width:1px;height:17px;background:#7d8791;"></div><div class="a" style="left:1722.7px;top:920px;width:8px;height:8px;border-radius:50%;background:#5a5a5a;box-shadow:0 0 0 1px #4a4a4a, inset 0 1px 1px #4c4c4c"></div><svg class="a" style="left:1879px;top:920.5px" width="11" height="8" viewBox="0 0 11 8"><path d="M4.500 0V8L0 4Z M6.500 0V8L11 4Z" fill="#d8dde2"/><path d="M5.500 0V8" stroke="#7a848e" stroke-width="0.8"/></svg>
<div class="t" style="left:1675.1px;top:918.0px;font-size:11px;line-height:15px;letter-spacing:-0.21px;color:#dcdcdc;">Dissolve</div>
<div class="t" style="left:1745.0px;top:918.0px;font-size:11px;line-height:15px;letter-spacing:0.23px;color:#0c0c0c;">0.0 %</div>
<div class="a" style="left:1720px;top:937px;width:32px;height:17px;background:#5c5c5c;border-radius:5px;box-shadow:0 0 0 1px #383838"></div>
<div class="a" style="left:1722.7px;top:941px;width:8px;height:8px;border-radius:50%;background:#5a5a5a;box-shadow:0 0 0 1px #4a4a4a, inset 0 1px 1px #4c4c4c"></div>
<div class="a" style="left:1735px;top:937px;width:17px;height:17px;background:#f39c1f;border-radius:0 5px 5px 0"></div>
<svg class="a" style="left:1738px;top:940px" width="12" height="12" viewBox="0 0 12 12"><path d="M1.500 6.500 L4.500 10 L11 1.500" stroke="#0a0a0a" stroke-width="2" fill="none"/></svg>
<div class="t" style="left:1756.8px;top:939.0px;font-size:11px;line-height:15px;letter-spacing:-0.42px;color:#dcdcdc;">Enable Command Regions</div>
<div class="a" style="left:1720px;top:958px;width:172px;height:17px;background:#5e5e5e;border-radius:5px;box-shadow:0 0 0 1px #383838"></div>
<div class="t" style="left:1664.5px;top:960.0px;font-size:11px;line-height:15px;letter-spacing:-0.23px;color:#dcdcdc;">Smoothing</div>
<div class="t" style="left:1724.7px;top:960.0px;font-size:11px;line-height:15px;letter-spacing:-0.27px;color:#dcdcdc;">Always Enabled</div>
<svg class="a" style="left:1879.8px;top:964.5px" width="7.5" height="4.5" viewBox="0 0 7.5 4.5"><path d="M0 0H7.5 L3.75 4.5Z" fill="#dcdcdc"/></svg>
<div class="a" style="left:1869.6px;top:979px;width:23px;height:22.6px;background:#5e5e5e;border-radius:5px;box-shadow:0 0 0 1px #383838"></div>
<div class="t" style="left:1874.3px;top:982.5px;font-size:12px;line-height:16px;letter-spacing:-0.35px;color:#7c9bb0;">&gt;&gt;</div>
<div class="a" style="left:1898.7px;top:579px;width:16.3px;height:374px;background:#565656;border-radius:4px;box-shadow:0 0 0 1px #3a3a3a"></div>
<div class="a" style="left:1898.7px;top:579px;width:16.3px;height:40.4px;background:#f39c1f;border-radius:4px 4px 0 0"></div>
<div class="vt" style="left:1898.7px;top:583.7px;width:15px;line-height:15px;color:#1a1000">Mesh</div>
<div class="a" style="left:1898.7px;top:619.4px;width:16.3px;height:1px;background:#444;"></div>
<div class="vt" style="left:1898.7px;top:625.3px;width:15px;line-height:15px;color:#cfcfcf">Surface</div>
<div class="a" style="left:1898.7px;top:673px;width:16.3px;height:1px;background:#444;"></div>
<div class="vt" style="left:1898.7px;top:679.1px;width:15px;line-height:15px;color:#cfcfcf">Curve</div>
<div class="a" style="left:1898.7px;top:718.6px;width:16.3px;height:1px;background:#444;"></div>
<div class="vt" style="left:1898.7px;top:723.3px;width:15px;line-height:15px;color:#cfcfcf">Display</div>
<div class="a" style="left:1898.7px;top:768px;width:16.3px;height:1px;background:#444;"></div>
<div class="vt" style="left:1898.7px;top:773.1px;width:15px;line-height:15px;color:#cfcfcf">Assembly</div>
<div class="a" style="left:1898.7px;top:829.5px;width:16.3px;height:1px;background:#444;"></div>
<div class="vt" style="left:1898.7px;top:833.0px;width:15px;line-height:15px;color:#cfcfcf">User Channels</div>
<div class="a" style="left:1898.7px;top:912px;width:16.3px;height:1px;background:#444;"></div>
<div class="vt" style="left:1898.7px;top:918.7px;width:15px;line-height:15px;color:#cfcfcf">Tags</div>
<div class="a" style="left:1612px;top:1013px;width:307px;height:1px;background:#1e1e1e;"></div><div class="a" style="left:1612px;top:1014px;width:307px;height:1px;background:#6a6a6a;"></div>
<svg class="a" style="left:1612.5px;top:1015px" width="4" height="4" viewBox="0 0 4 4"><path d="M0 0H4L0 4Z" fill="#2e2e2e"/></svg><svg class="a" style="left:1914.5px;top:1015px" width="4" height="4" viewBox="0 0 4 4"><path d="M0 0H4V4Z" fill="#2e2e2e"/></svg>
<div class="t" style="left:1617.8px;top:1027.5px;font-size:11px;line-height:15px;letter-spacing:-0.22px;color:#dcdcdc;">&gt;</div>
<div class="a" style="left:1631.6px;top:1023.5px;width:255.4px;height:18.8px;background:#909aa3;border-radius:5px;box-shadow:0 0 0 1px #383838"></div>
<div class="t" style="left:1641.5px;top:1026.5px;font-size:11px;line-height:15px;letter-spacing:-0.61px;color:#59616a;">Command</div>
<div class="a" style="left:1891px;top:1022px;width:22.6px;height:22px;background:#5e5e5e;border-radius:5px;box-shadow:0 0 0 1px #383838"></div>
<svg class="a" style="left:1895.5px;top:1027.5px" width="13" height="13" viewBox="0 0 13 13"><circle cx="6.500" cy="6.500" r="5.300" fill="none" stroke="#e2606c" stroke-width="1.400"/></svg>
<!-- window buttons -->
<div class="a" style="left:1813px;top:0;width:106px;height:18px;border-radius:0 0 6px 6px;background:#2a3b50"></div>
<div class="a" style="left:1814px;top:0;width:104px;height:17px;border-radius:0 0 5px 5px;background:#b4c2d1"></div>
<div class="a" style="left:1815px;top:-1px;width:27px;height:17px;border-radius:0 0 0 4px;background:linear-gradient(180deg,#bfc9d3 0,#a5b1be 45%,#5f7085 50%,#7a8ca0 100%);box-shadow:inset 0 0 0 1px #2c3b4e, inset 0 0 0 2px rgba(255,255,255,0.28)"></div>
<div class="a" style="left:1843px;top:-1px;width:25px;height:17px;background:linear-gradient(180deg,#bfc9d3 0,#a5b1be 45%,#5f7085 50%,#7a8ca0 100%);box-shadow:inset 0 0 0 1px #2c3b4e, inset 0 0 0 2px rgba(255,255,255,0.28)"></div>
<div class="a" style="left:1869px;top:-1px;width:48px;height:17px;border-radius:0 0 4px 0;background:linear-gradient(180deg,#e7a89d 0,#db897b 45%,#c2351b 52%,#c84a30 80%,#d97d64 100%);box-shadow:inset 0 0 0 1px #4e1a12, inset 0 0 0 2px rgba(255,255,255,0.25)"></div>
<div class="a" style="left:1824px;top:8px;width:10px;height:3px;background:#fff;box-shadow:0 0 0 1px #3a4656"></div>
<svg class="a" style="left:1849px;top:2px" width="13" height="12" viewBox="0 0 13 12"><path d="M4 1.500h7.500v7h-7.500z" fill="none" stroke="#3a4656" stroke-width="3"/><path d="M4 1.500h7.500v7h-7.500z" fill="none" stroke="#fff" stroke-width="1.500"/><path d="M1.800 3.500h7.200v6.500h-7.200z" fill="#8a9bb0" stroke="#3a4656" stroke-width="3.400"/><path d="M1.800 3.500h7.200v6.500h-7.200z" fill="#55657a" stroke="#fff" stroke-width="1.800"/></svg>
<svg class="a" style="left:1887px;top:2px" width="13" height="11" viewBox="0 0 13 11"><path d="M2.200 1.500 L10.800 9.500 M10.800 1.500 L2.200 9.500" stroke="#3a3040" stroke-width="4.600"/><path d="M2.200 1.500 L10.800 9.500 M10.800 1.500 L2.200 9.500" stroke="#fff" stroke-width="2.900"/></svg>
<!-- app icon -->
<svg class="a" style="left:1px;top:2px" width="15" height="16" viewBox="0 0 15 16"><circle cx="7" cy="8" r="7" fill="#1c1c1c"/><circle cx="7" cy="8" r="6" fill="none" stroke="#f0a020" stroke-width="1.5"/><path d="M3.5 9.5 Q5 4.5 7 7.5 Q8.5 10.5 10.5 5.5" fill="none" stroke="#f0a020" stroke-width="2.2"/></svg>
<!-- green annotations -->
<div class="a" style="left:0;top:0;width:1px;height:1049px;background:#4db43a"></div>
<div class="a" style="left:1919px;top:0;width:1px;height:1049px;background:#4db43a"></div>
<div class="a" style="left:587.5px;top:34px;width:775px;height:37px;border:6px solid #46ee10;border-radius:12px"></div>
<div class="a" style="left:-0.8px;top:61.8px;width:205px;height:38px;border:6px solid #46ee10;border-radius:11.5px"></div>
<div class="t" style="left:545px;top:22.5px;font-size:51px;line-height:58px;font-weight:bold;color:#46ee10;letter-spacing:0;clip-path:polygon(0 0,100% 0,100% 39.5px,20.2px 39.5px,20.2px 100%,11.6px 100%,11.6px 39.5px,0 39.5px);transform:scaleY(1.02);transform-origin:0 0">1</div>
<div class="t" style="left:213.3px;top:53.7px;font-size:51px;line-height:58px;font-weight:bold;color:#46ee10;letter-spacing:0;transform:scaleX(1.02)">2</div>
</body></html>
